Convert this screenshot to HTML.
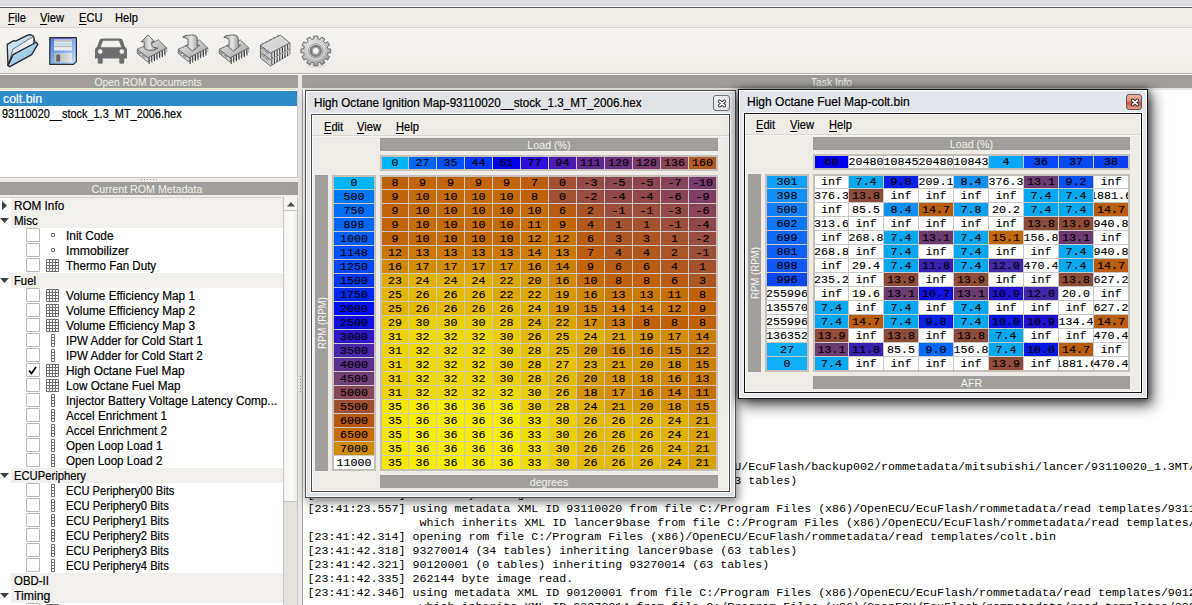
<!DOCTYPE html><html><head><meta charset="utf-8"><style>
*{margin:0;padding:0;box-sizing:border-box}
html,body{width:1192px;height:605px;overflow:hidden;background:#efebe6;font-family:"Liberation Sans",sans-serif}
.m{font-family:"Liberation Mono",monospace}
.c{position:absolute;overflow:hidden;display:flex;justify-content:center;font-family:"Liberation Mono",monospace;font-size:11.67px;color:#000;white-space:pre;-webkit-text-stroke:0.15px #000}
u{text-decoration:none;border-bottom:1px solid #000}
</style></head><body><div style="position:absolute;left:0px;top:0px;width:1192px;height:6px;background:#dcdee2"></div>
<div style="position:absolute;left:0px;top:6px;width:1192px;height:1px;background:#eef0f3"></div>
<div style="position:absolute;left:0px;top:7px;width:1192px;height:1px;background:#5c5c5c"></div>
<div style="position:absolute;left:0px;top:8px;width:1192px;height:19px;background:#efebe6"></div>
<div style="position:absolute;left:0px;top:27px;width:1192px;height:1px;background:#d8d4ce"></div>
<div style="position:absolute;left:0px;top:28px;width:1192px;height:45px;background:linear-gradient(#f7f5f1,#eeebe6)"></div>
<div style="position:absolute;left:0px;top:73px;width:1192px;height:1px;background:#bab6b0"></div>
<div style="position:absolute;left:0px;top:74px;width:1192px;height:1px;background:#f8f7f5"></div>
<div style="position:absolute;left:8px;top:10.88px;font-family:'Liberation Sans', sans-serif;font-size:12.5px;line-height:14.37px;white-space:pre;color:#000;transform:scaleX(0.89);transform-origin:0 0;-webkit-text-stroke:0.2px #000;"><span style="text-decoration:underline;text-underline-offset:2px;text-decoration-thickness:1px">F</span>ile</div>
<div style="position:absolute;left:40px;top:10.88px;font-family:'Liberation Sans', sans-serif;font-size:12.5px;line-height:14.37px;white-space:pre;color:#000;transform:scaleX(0.89);transform-origin:0 0;-webkit-text-stroke:0.2px #000;"><span style="text-decoration:underline;text-underline-offset:2px;text-decoration-thickness:1px">V</span>iew</div>
<div style="position:absolute;left:79px;top:10.88px;font-family:'Liberation Sans', sans-serif;font-size:12.5px;line-height:14.37px;white-space:pre;color:#000;transform:scaleX(0.89);transform-origin:0 0;-webkit-text-stroke:0.2px #000;"><span style="text-decoration:underline;text-underline-offset:2px;text-decoration-thickness:1px">E</span>CU</div>
<div style="position:absolute;left:115px;top:10.88px;font-family:'Liberation Sans', sans-serif;font-size:12.5px;line-height:14.37px;white-space:pre;color:#000;transform:scaleX(0.89);transform-origin:0 0;-webkit-text-stroke:0.2px #000;">Help</div>
<div style="position:absolute;left:0px;top:75px;width:298px;height:13px;background:#a19f9b"></div>
<div style="position:absolute;left:302px;top:75px;width:890px;height:13px;background:#a19f9b"></div>
<div style="position:absolute;left:0px;top:88px;width:1192px;height:2px;background:#e9e6e1"></div>
<div style="position:absolute;left:-1.5px;top:74.5px;width:298px;height:14px;text-align:center;font-size:11px;line-height:14px;color:#f4f2ea;transform:scaleX(0.935)">Open ROM Documents</div>
<div style="position:absolute;left:302px;top:74.5px;width:1059px;height:14px;text-align:center;font-size:11px;line-height:14px;color:#f4f2ea;transform:scaleX(0.935)">Task Info</div>
<div style="position:absolute;left:0px;top:90px;width:298px;height:88px;background:#fff;border-right:1px solid #ccc8c2;border-bottom:1px solid #ccc8c2"></div>
<div style="position:absolute;left:0px;top:91px;width:297px;height:15px;background:#308cc8"></div>
<div style="position:absolute;left:2.5px;top:91.88px;font-family:'Liberation Sans', sans-serif;font-size:12.5px;line-height:14.37px;white-space:pre;color:#fff;transform:scaleX(0.99);transform-origin:0 0;-webkit-text-stroke:0.2px #fff;">colt.bin</div>
<div style="position:absolute;left:1.5px;top:106.88px;font-family:'Liberation Sans', sans-serif;font-size:12.5px;line-height:14.37px;white-space:pre;color:#000;transform:scaleX(0.874);transform-origin:0 0;-webkit-text-stroke:0.2px #000;">93110020__stock_1.3_MT_2006.hex</div>
<div style="position:absolute;left:0px;top:182px;width:298px;height:13px;background:#a19f9b"></div>
<div style="position:absolute;left:-2px;top:181.5px;width:298px;height:14px;text-align:center;font-size:11px;line-height:14px;color:#f4f2ea;transform:scaleX(0.97)">Current ROM Metadata</div>
<div style="position:absolute;left:0px;top:197px;width:298px;height:408px;background:#fff;border-right:1px solid #ccc8c2;border-top:1px solid #d4d0ca"></div>
<div style="position:absolute;left:11px;top:198px;width:272px;height:15px;background:#f2f0ec"></div>
<svg style="position:absolute;left:0px;top:198px" width="12" height="15"><path d="M2 3 L7 7.5 L2 12 Z" fill="#404040"/></svg>
<div style="position:absolute;left:14px;top:199.38px;font-family:'Liberation Sans', sans-serif;font-size:12.5px;line-height:14.37px;white-space:pre;color:#000;transform:scaleX(0.938);transform-origin:0 0;-webkit-text-stroke:0.2px #000;">ROM Info</div>
<div style="position:absolute;left:11px;top:213px;width:272px;height:15px;background:#f2f0ec"></div>
<svg style="position:absolute;left:0px;top:213px" width="12" height="15"><path d="M0 5 L9 5 L4.5 10 Z" fill="#404040"/></svg>
<div style="position:absolute;left:14px;top:214.38px;font-family:'Liberation Sans', sans-serif;font-size:12.5px;line-height:14.37px;white-space:pre;color:#000;transform:scaleX(0.922);transform-origin:0 0;-webkit-text-stroke:0.2px #000;">Misc</div>
<div style="position:absolute;left:26px;top:228px;width:14px;height:14px;background:#fff;border:1px solid #bcb8b2;border-radius:1px"></div>
<div style="position:absolute;left:51px;top:233px;width:4px;height:4px;border:1px solid #6e6e6e;background:#fff;border-radius:1px"></div>
<div style="position:absolute;left:66px;top:229.38px;font-family:'Liberation Sans', sans-serif;font-size:12.5px;line-height:14.37px;white-space:pre;color:#000;transform:scaleX(0.951);transform-origin:0 0;-webkit-text-stroke:0.2px #000;">Init Code</div>
<div style="position:absolute;left:26px;top:243px;width:14px;height:14px;background:#fff;border:1px solid #bcb8b2;border-radius:1px"></div>
<div style="position:absolute;left:51px;top:248px;width:4px;height:4px;border:1px solid #6e6e6e;background:#fff;border-radius:1px"></div>
<div style="position:absolute;left:66px;top:244.38px;font-family:'Liberation Sans', sans-serif;font-size:12.5px;line-height:14.37px;white-space:pre;color:#000;transform:scaleX(0.984);transform-origin:0 0;-webkit-text-stroke:0.2px #000;">Immobilizer</div>
<div style="position:absolute;left:26px;top:258px;width:14px;height:14px;background:#fff;border:1px solid #bcb8b2;border-radius:1px"></div>
<svg style="position:absolute;left:46px;top:259px" width="13" height="13" viewBox="0 0 13 13"><rect x="0" y="0" width="13" height="13" rx="1" fill="#6e6e6e"/><rect x="1" y="1" width="2" height="2" fill="#fff"/><rect x="1" y="4" width="2" height="2" fill="#fff"/><rect x="1" y="7" width="2" height="2" fill="#fff"/><rect x="1" y="10" width="2" height="2" fill="#fff"/><rect x="4" y="1" width="2" height="2" fill="#fff"/><rect x="4" y="4" width="2" height="2" fill="#fff"/><rect x="4" y="7" width="2" height="2" fill="#fff"/><rect x="4" y="10" width="2" height="2" fill="#fff"/><rect x="7" y="1" width="2" height="2" fill="#fff"/><rect x="7" y="4" width="2" height="2" fill="#fff"/><rect x="7" y="7" width="2" height="2" fill="#fff"/><rect x="7" y="10" width="2" height="2" fill="#fff"/><rect x="10" y="1" width="2" height="2" fill="#fff"/><rect x="10" y="4" width="2" height="2" fill="#fff"/><rect x="10" y="7" width="2" height="2" fill="#fff"/><rect x="10" y="10" width="2" height="2" fill="#fff"/></svg>
<div style="position:absolute;left:66px;top:259.38px;font-family:'Liberation Sans', sans-serif;font-size:12.5px;line-height:14.37px;white-space:pre;color:#000;transform:scaleX(0.927);transform-origin:0 0;-webkit-text-stroke:0.2px #000;">Thermo Fan Duty</div>
<div style="position:absolute;left:11px;top:273px;width:272px;height:15px;background:#f2f0ec"></div>
<svg style="position:absolute;left:0px;top:273px" width="12" height="15"><path d="M0 5 L9 5 L4.5 10 Z" fill="#404040"/></svg>
<div style="position:absolute;left:14px;top:274.38px;font-family:'Liberation Sans', sans-serif;font-size:12.5px;line-height:14.37px;white-space:pre;color:#000;transform:scaleX(0.9);transform-origin:0 0;-webkit-text-stroke:0.2px #000;">Fuel</div>
<div style="position:absolute;left:26px;top:288px;width:14px;height:14px;background:#fff;border:1px solid #bcb8b2;border-radius:1px"></div>
<svg style="position:absolute;left:46px;top:289px" width="13" height="13" viewBox="0 0 13 13"><rect x="0" y="0" width="13" height="13" rx="1" fill="#6e6e6e"/><rect x="1" y="1" width="2" height="2" fill="#fff"/><rect x="1" y="4" width="2" height="2" fill="#fff"/><rect x="1" y="7" width="2" height="2" fill="#fff"/><rect x="1" y="10" width="2" height="2" fill="#fff"/><rect x="4" y="1" width="2" height="2" fill="#fff"/><rect x="4" y="4" width="2" height="2" fill="#fff"/><rect x="4" y="7" width="2" height="2" fill="#fff"/><rect x="4" y="10" width="2" height="2" fill="#fff"/><rect x="7" y="1" width="2" height="2" fill="#fff"/><rect x="7" y="4" width="2" height="2" fill="#fff"/><rect x="7" y="7" width="2" height="2" fill="#fff"/><rect x="7" y="10" width="2" height="2" fill="#fff"/><rect x="10" y="1" width="2" height="2" fill="#fff"/><rect x="10" y="4" width="2" height="2" fill="#fff"/><rect x="10" y="7" width="2" height="2" fill="#fff"/><rect x="10" y="10" width="2" height="2" fill="#fff"/></svg>
<div style="position:absolute;left:66px;top:289.38px;font-family:'Liberation Sans', sans-serif;font-size:12.5px;line-height:14.37px;white-space:pre;color:#000;transform:scaleX(0.944);transform-origin:0 0;-webkit-text-stroke:0.2px #000;">Volume Efficiency Map 1</div>
<div style="position:absolute;left:26px;top:303px;width:14px;height:14px;background:#fff;border:1px solid #bcb8b2;border-radius:1px"></div>
<svg style="position:absolute;left:46px;top:304px" width="13" height="13" viewBox="0 0 13 13"><rect x="0" y="0" width="13" height="13" rx="1" fill="#6e6e6e"/><rect x="1" y="1" width="2" height="2" fill="#fff"/><rect x="1" y="4" width="2" height="2" fill="#fff"/><rect x="1" y="7" width="2" height="2" fill="#fff"/><rect x="1" y="10" width="2" height="2" fill="#fff"/><rect x="4" y="1" width="2" height="2" fill="#fff"/><rect x="4" y="4" width="2" height="2" fill="#fff"/><rect x="4" y="7" width="2" height="2" fill="#fff"/><rect x="4" y="10" width="2" height="2" fill="#fff"/><rect x="7" y="1" width="2" height="2" fill="#fff"/><rect x="7" y="4" width="2" height="2" fill="#fff"/><rect x="7" y="7" width="2" height="2" fill="#fff"/><rect x="7" y="10" width="2" height="2" fill="#fff"/><rect x="10" y="1" width="2" height="2" fill="#fff"/><rect x="10" y="4" width="2" height="2" fill="#fff"/><rect x="10" y="7" width="2" height="2" fill="#fff"/><rect x="10" y="10" width="2" height="2" fill="#fff"/></svg>
<div style="position:absolute;left:66px;top:304.38px;font-family:'Liberation Sans', sans-serif;font-size:12.5px;line-height:14.37px;white-space:pre;color:#000;transform:scaleX(0.944);transform-origin:0 0;-webkit-text-stroke:0.2px #000;">Volume Efficiency Map 2</div>
<div style="position:absolute;left:26px;top:318px;width:14px;height:14px;background:#fff;border:1px solid #bcb8b2;border-radius:1px"></div>
<svg style="position:absolute;left:46px;top:319px" width="13" height="13" viewBox="0 0 13 13"><rect x="0" y="0" width="13" height="13" rx="1" fill="#6e6e6e"/><rect x="1" y="1" width="2" height="2" fill="#fff"/><rect x="1" y="4" width="2" height="2" fill="#fff"/><rect x="1" y="7" width="2" height="2" fill="#fff"/><rect x="1" y="10" width="2" height="2" fill="#fff"/><rect x="4" y="1" width="2" height="2" fill="#fff"/><rect x="4" y="4" width="2" height="2" fill="#fff"/><rect x="4" y="7" width="2" height="2" fill="#fff"/><rect x="4" y="10" width="2" height="2" fill="#fff"/><rect x="7" y="1" width="2" height="2" fill="#fff"/><rect x="7" y="4" width="2" height="2" fill="#fff"/><rect x="7" y="7" width="2" height="2" fill="#fff"/><rect x="7" y="10" width="2" height="2" fill="#fff"/><rect x="10" y="1" width="2" height="2" fill="#fff"/><rect x="10" y="4" width="2" height="2" fill="#fff"/><rect x="10" y="7" width="2" height="2" fill="#fff"/><rect x="10" y="10" width="2" height="2" fill="#fff"/></svg>
<div style="position:absolute;left:66px;top:319.38px;font-family:'Liberation Sans', sans-serif;font-size:12.5px;line-height:14.37px;white-space:pre;color:#000;transform:scaleX(0.944);transform-origin:0 0;-webkit-text-stroke:0.2px #000;">Volume Efficiency Map 3</div>
<div style="position:absolute;left:26px;top:333px;width:14px;height:14px;background:#fff;border:1px solid #bcb8b2;border-radius:1px"></div>
<svg style="position:absolute;left:51px;top:334px" width="4" height="13" viewBox="0 0 4 13"><rect x="0" y="0" width="4" height="13" rx="1" fill="#6e6e6e"/><rect x="1" y="1" width="2" height="2" fill="#fff"/><rect x="1" y="4" width="2" height="2" fill="#fff"/><rect x="1" y="7" width="2" height="2" fill="#fff"/><rect x="1" y="10" width="2" height="2" fill="#fff"/></svg>
<div style="position:absolute;left:66px;top:334.38px;font-family:'Liberation Sans', sans-serif;font-size:12.5px;line-height:14.37px;white-space:pre;color:#000;transform:scaleX(0.928);transform-origin:0 0;-webkit-text-stroke:0.2px #000;">IPW Adder for Cold Start 1</div>
<div style="position:absolute;left:26px;top:348px;width:14px;height:14px;background:#fff;border:1px solid #bcb8b2;border-radius:1px"></div>
<svg style="position:absolute;left:51px;top:349px" width="4" height="13" viewBox="0 0 4 13"><rect x="0" y="0" width="4" height="13" rx="1" fill="#6e6e6e"/><rect x="1" y="1" width="2" height="2" fill="#fff"/><rect x="1" y="4" width="2" height="2" fill="#fff"/><rect x="1" y="7" width="2" height="2" fill="#fff"/><rect x="1" y="10" width="2" height="2" fill="#fff"/></svg>
<div style="position:absolute;left:66px;top:349.38px;font-family:'Liberation Sans', sans-serif;font-size:12.5px;line-height:14.37px;white-space:pre;color:#000;transform:scaleX(0.928);transform-origin:0 0;-webkit-text-stroke:0.2px #000;">IPW Adder for Cold Start 2</div>
<div style="position:absolute;left:26px;top:363px;width:14px;height:14px;background:#fff;border:1px solid #bcb8b2;border-radius:1px"></div>
<svg style="position:absolute;left:27px;top:365px" width="11" height="11"><path d="M2 5.5 L4.5 8.5 L9 2" fill="none" stroke="#000" stroke-width="1.8"/></svg>
<svg style="position:absolute;left:46px;top:364px" width="13" height="13" viewBox="0 0 13 13"><rect x="0" y="0" width="13" height="13" rx="1" fill="#6e6e6e"/><rect x="1" y="1" width="2" height="2" fill="#fff"/><rect x="1" y="4" width="2" height="2" fill="#fff"/><rect x="1" y="7" width="2" height="2" fill="#fff"/><rect x="1" y="10" width="2" height="2" fill="#fff"/><rect x="4" y="1" width="2" height="2" fill="#fff"/><rect x="4" y="4" width="2" height="2" fill="#fff"/><rect x="4" y="7" width="2" height="2" fill="#fff"/><rect x="4" y="10" width="2" height="2" fill="#fff"/><rect x="7" y="1" width="2" height="2" fill="#fff"/><rect x="7" y="4" width="2" height="2" fill="#fff"/><rect x="7" y="7" width="2" height="2" fill="#fff"/><rect x="7" y="10" width="2" height="2" fill="#fff"/><rect x="10" y="1" width="2" height="2" fill="#fff"/><rect x="10" y="4" width="2" height="2" fill="#fff"/><rect x="10" y="7" width="2" height="2" fill="#fff"/><rect x="10" y="10" width="2" height="2" fill="#fff"/></svg>
<div style="position:absolute;left:66px;top:364.38px;font-family:'Liberation Sans', sans-serif;font-size:12.5px;line-height:14.37px;white-space:pre;color:#000;transform:scaleX(0.948);transform-origin:0 0;-webkit-text-stroke:0.2px #000;">High Octane Fuel Map</div>
<div style="position:absolute;left:26px;top:378px;width:14px;height:14px;background:#fff;border:1px solid #bcb8b2;border-radius:1px"></div>
<svg style="position:absolute;left:46px;top:379px" width="13" height="13" viewBox="0 0 13 13"><rect x="0" y="0" width="13" height="13" rx="1" fill="#6e6e6e"/><rect x="1" y="1" width="2" height="2" fill="#fff"/><rect x="1" y="4" width="2" height="2" fill="#fff"/><rect x="1" y="7" width="2" height="2" fill="#fff"/><rect x="1" y="10" width="2" height="2" fill="#fff"/><rect x="4" y="1" width="2" height="2" fill="#fff"/><rect x="4" y="4" width="2" height="2" fill="#fff"/><rect x="4" y="7" width="2" height="2" fill="#fff"/><rect x="4" y="10" width="2" height="2" fill="#fff"/><rect x="7" y="1" width="2" height="2" fill="#fff"/><rect x="7" y="4" width="2" height="2" fill="#fff"/><rect x="7" y="7" width="2" height="2" fill="#fff"/><rect x="7" y="10" width="2" height="2" fill="#fff"/><rect x="10" y="1" width="2" height="2" fill="#fff"/><rect x="10" y="4" width="2" height="2" fill="#fff"/><rect x="10" y="7" width="2" height="2" fill="#fff"/><rect x="10" y="10" width="2" height="2" fill="#fff"/></svg>
<div style="position:absolute;left:66px;top:379.38px;font-family:'Liberation Sans', sans-serif;font-size:12.5px;line-height:14.37px;white-space:pre;color:#000;transform:scaleX(0.936);transform-origin:0 0;-webkit-text-stroke:0.2px #000;">Low Octane Fuel Map</div>
<div style="position:absolute;left:26px;top:393px;width:14px;height:14px;background:#fff;border:1px solid #bcb8b2;border-radius:1px"></div>
<svg style="position:absolute;left:51px;top:394px" width="4" height="13" viewBox="0 0 4 13"><rect x="0" y="0" width="4" height="13" rx="1" fill="#6e6e6e"/><rect x="1" y="1" width="2" height="2" fill="#fff"/><rect x="1" y="4" width="2" height="2" fill="#fff"/><rect x="1" y="7" width="2" height="2" fill="#fff"/><rect x="1" y="10" width="2" height="2" fill="#fff"/></svg>
<div style="position:absolute;left:66px;top:394.38px;font-family:'Liberation Sans', sans-serif;font-size:12.5px;line-height:14.37px;white-space:pre;color:#000;transform:scaleX(0.944);transform-origin:0 0;-webkit-text-stroke:0.2px #000;">Injector Battery Voltage Latency Comp...</div>
<div style="position:absolute;left:26px;top:408px;width:14px;height:14px;background:#fff;border:1px solid #bcb8b2;border-radius:1px"></div>
<svg style="position:absolute;left:51px;top:409px" width="4" height="13" viewBox="0 0 4 13"><rect x="0" y="0" width="4" height="13" rx="1" fill="#6e6e6e"/><rect x="1" y="1" width="2" height="2" fill="#fff"/><rect x="1" y="4" width="2" height="2" fill="#fff"/><rect x="1" y="7" width="2" height="2" fill="#fff"/><rect x="1" y="10" width="2" height="2" fill="#fff"/></svg>
<div style="position:absolute;left:66px;top:409.38px;font-family:'Liberation Sans', sans-serif;font-size:12.5px;line-height:14.37px;white-space:pre;color:#000;transform:scaleX(0.938);transform-origin:0 0;-webkit-text-stroke:0.2px #000;">Accel Enrichment 1</div>
<div style="position:absolute;left:26px;top:423px;width:14px;height:14px;background:#fff;border:1px solid #bcb8b2;border-radius:1px"></div>
<svg style="position:absolute;left:51px;top:424px" width="4" height="13" viewBox="0 0 4 13"><rect x="0" y="0" width="4" height="13" rx="1" fill="#6e6e6e"/><rect x="1" y="1" width="2" height="2" fill="#fff"/><rect x="1" y="4" width="2" height="2" fill="#fff"/><rect x="1" y="7" width="2" height="2" fill="#fff"/><rect x="1" y="10" width="2" height="2" fill="#fff"/></svg>
<div style="position:absolute;left:66px;top:424.38px;font-family:'Liberation Sans', sans-serif;font-size:12.5px;line-height:14.37px;white-space:pre;color:#000;transform:scaleX(0.938);transform-origin:0 0;-webkit-text-stroke:0.2px #000;">Accel Enrichment 2</div>
<div style="position:absolute;left:26px;top:438px;width:14px;height:14px;background:#fff;border:1px solid #bcb8b2;border-radius:1px"></div>
<svg style="position:absolute;left:51px;top:439px" width="4" height="13" viewBox="0 0 4 13"><rect x="0" y="0" width="4" height="13" rx="1" fill="#6e6e6e"/><rect x="1" y="1" width="2" height="2" fill="#fff"/><rect x="1" y="4" width="2" height="2" fill="#fff"/><rect x="1" y="7" width="2" height="2" fill="#fff"/><rect x="1" y="10" width="2" height="2" fill="#fff"/></svg>
<div style="position:absolute;left:66px;top:439.38px;font-family:'Liberation Sans', sans-serif;font-size:12.5px;line-height:14.37px;white-space:pre;color:#000;transform:scaleX(0.931);transform-origin:0 0;-webkit-text-stroke:0.2px #000;">Open Loop Load 1</div>
<div style="position:absolute;left:26px;top:453px;width:14px;height:14px;background:#fff;border:1px solid #bcb8b2;border-radius:1px"></div>
<svg style="position:absolute;left:51px;top:454px" width="4" height="13" viewBox="0 0 4 13"><rect x="0" y="0" width="4" height="13" rx="1" fill="#6e6e6e"/><rect x="1" y="1" width="2" height="2" fill="#fff"/><rect x="1" y="4" width="2" height="2" fill="#fff"/><rect x="1" y="7" width="2" height="2" fill="#fff"/><rect x="1" y="10" width="2" height="2" fill="#fff"/></svg>
<div style="position:absolute;left:66px;top:454.38px;font-family:'Liberation Sans', sans-serif;font-size:12.5px;line-height:14.37px;white-space:pre;color:#000;transform:scaleX(0.931);transform-origin:0 0;-webkit-text-stroke:0.2px #000;">Open Loop Load 2</div>
<div style="position:absolute;left:11px;top:468px;width:272px;height:15px;background:#f2f0ec"></div>
<svg style="position:absolute;left:0px;top:468px" width="12" height="15"><path d="M0 5 L9 5 L4.5 10 Z" fill="#404040"/></svg>
<div style="position:absolute;left:14px;top:469.38px;font-family:'Liberation Sans', sans-serif;font-size:12.5px;line-height:14.37px;white-space:pre;color:#000;transform:scaleX(0.899);transform-origin:0 0;-webkit-text-stroke:0.2px #000;">ECUPeriphery</div>
<div style="position:absolute;left:26px;top:483px;width:14px;height:14px;background:#fff;border:1px solid #bcb8b2;border-radius:1px"></div>
<svg style="position:absolute;left:51px;top:484px" width="4" height="13" viewBox="0 0 4 13"><rect x="0" y="0" width="4" height="13" rx="1" fill="#6e6e6e"/><rect x="1" y="1" width="2" height="2" fill="#fff"/><rect x="1" y="4" width="2" height="2" fill="#fff"/><rect x="1" y="7" width="2" height="2" fill="#fff"/><rect x="1" y="10" width="2" height="2" fill="#fff"/></svg>
<div style="position:absolute;left:66px;top:484.38px;font-family:'Liberation Sans', sans-serif;font-size:12.5px;line-height:14.37px;white-space:pre;color:#000;transform:scaleX(0.891);transform-origin:0 0;-webkit-text-stroke:0.2px #000;">ECU Periphery00 Bits</div>
<div style="position:absolute;left:26px;top:498px;width:14px;height:14px;background:#fff;border:1px solid #bcb8b2;border-radius:1px"></div>
<svg style="position:absolute;left:51px;top:499px" width="4" height="13" viewBox="0 0 4 13"><rect x="0" y="0" width="4" height="13" rx="1" fill="#6e6e6e"/><rect x="1" y="1" width="2" height="2" fill="#fff"/><rect x="1" y="4" width="2" height="2" fill="#fff"/><rect x="1" y="7" width="2" height="2" fill="#fff"/><rect x="1" y="10" width="2" height="2" fill="#fff"/></svg>
<div style="position:absolute;left:66px;top:499.38px;font-family:'Liberation Sans', sans-serif;font-size:12.5px;line-height:14.37px;white-space:pre;color:#000;transform:scaleX(0.897);transform-origin:0 0;-webkit-text-stroke:0.2px #000;">ECU Periphery0 Bits</div>
<div style="position:absolute;left:26px;top:513px;width:14px;height:14px;background:#fff;border:1px solid #bcb8b2;border-radius:1px"></div>
<svg style="position:absolute;left:51px;top:514px" width="4" height="13" viewBox="0 0 4 13"><rect x="0" y="0" width="4" height="13" rx="1" fill="#6e6e6e"/><rect x="1" y="1" width="2" height="2" fill="#fff"/><rect x="1" y="4" width="2" height="2" fill="#fff"/><rect x="1" y="7" width="2" height="2" fill="#fff"/><rect x="1" y="10" width="2" height="2" fill="#fff"/></svg>
<div style="position:absolute;left:66px;top:514.38px;font-family:'Liberation Sans', sans-serif;font-size:12.5px;line-height:14.37px;white-space:pre;color:#000;transform:scaleX(0.897);transform-origin:0 0;-webkit-text-stroke:0.2px #000;">ECU Periphery1 Bits</div>
<div style="position:absolute;left:26px;top:528px;width:14px;height:14px;background:#fff;border:1px solid #bcb8b2;border-radius:1px"></div>
<svg style="position:absolute;left:51px;top:529px" width="4" height="13" viewBox="0 0 4 13"><rect x="0" y="0" width="4" height="13" rx="1" fill="#6e6e6e"/><rect x="1" y="1" width="2" height="2" fill="#fff"/><rect x="1" y="4" width="2" height="2" fill="#fff"/><rect x="1" y="7" width="2" height="2" fill="#fff"/><rect x="1" y="10" width="2" height="2" fill="#fff"/></svg>
<div style="position:absolute;left:66px;top:529.38px;font-family:'Liberation Sans', sans-serif;font-size:12.5px;line-height:14.37px;white-space:pre;color:#000;transform:scaleX(0.897);transform-origin:0 0;-webkit-text-stroke:0.2px #000;">ECU Periphery2 Bits</div>
<div style="position:absolute;left:26px;top:543px;width:14px;height:14px;background:#fff;border:1px solid #bcb8b2;border-radius:1px"></div>
<svg style="position:absolute;left:51px;top:544px" width="4" height="13" viewBox="0 0 4 13"><rect x="0" y="0" width="4" height="13" rx="1" fill="#6e6e6e"/><rect x="1" y="1" width="2" height="2" fill="#fff"/><rect x="1" y="4" width="2" height="2" fill="#fff"/><rect x="1" y="7" width="2" height="2" fill="#fff"/><rect x="1" y="10" width="2" height="2" fill="#fff"/></svg>
<div style="position:absolute;left:66px;top:544.38px;font-family:'Liberation Sans', sans-serif;font-size:12.5px;line-height:14.37px;white-space:pre;color:#000;transform:scaleX(0.897);transform-origin:0 0;-webkit-text-stroke:0.2px #000;">ECU Periphery3 Bits</div>
<div style="position:absolute;left:26px;top:558px;width:14px;height:14px;background:#fff;border:1px solid #bcb8b2;border-radius:1px"></div>
<svg style="position:absolute;left:51px;top:559px" width="4" height="13" viewBox="0 0 4 13"><rect x="0" y="0" width="4" height="13" rx="1" fill="#6e6e6e"/><rect x="1" y="1" width="2" height="2" fill="#fff"/><rect x="1" y="4" width="2" height="2" fill="#fff"/><rect x="1" y="7" width="2" height="2" fill="#fff"/><rect x="1" y="10" width="2" height="2" fill="#fff"/></svg>
<div style="position:absolute;left:66px;top:559.38px;font-family:'Liberation Sans', sans-serif;font-size:12.5px;line-height:14.37px;white-space:pre;color:#000;transform:scaleX(0.897);transform-origin:0 0;-webkit-text-stroke:0.2px #000;">ECU Periphery4 Bits</div>
<div style="position:absolute;left:11px;top:573px;width:272px;height:15px;background:#f2f0ec"></div>
<div style="position:absolute;left:14px;top:574.38px;font-family:'Liberation Sans', sans-serif;font-size:12.5px;line-height:14.37px;white-space:pre;color:#000;transform:scaleX(0.914);transform-origin:0 0;-webkit-text-stroke:0.2px #000;">OBD-II</div>
<div style="position:absolute;left:11px;top:588px;width:272px;height:15px;background:#f2f0ec"></div>
<svg style="position:absolute;left:0px;top:588px" width="12" height="15"><path d="M0 5 L9 5 L4.5 10 Z" fill="#404040"/></svg>
<div style="position:absolute;left:14px;top:589.38px;font-family:'Liberation Sans', sans-serif;font-size:12.5px;line-height:14.37px;white-space:pre;color:#000;transform:scaleX(0.98);transform-origin:0 0;-webkit-text-stroke:0.2px #000;">Timing</div>
<div style="position:absolute;left:26px;top:603px;width:14px;height:14px;background:#fff;border:1px solid #bcb8b2;border-radius:1px"></div>
<svg style="position:absolute;left:46px;top:604px" width="13" height="13" viewBox="0 0 13 13"><rect x="0" y="0" width="13" height="13" rx="1" fill="#6e6e6e"/><rect x="1" y="1" width="2" height="2" fill="#fff"/><rect x="1" y="4" width="2" height="2" fill="#fff"/><rect x="1" y="7" width="2" height="2" fill="#fff"/><rect x="1" y="10" width="2" height="2" fill="#fff"/><rect x="4" y="1" width="2" height="2" fill="#fff"/><rect x="4" y="4" width="2" height="2" fill="#fff"/><rect x="4" y="7" width="2" height="2" fill="#fff"/><rect x="4" y="10" width="2" height="2" fill="#fff"/><rect x="7" y="1" width="2" height="2" fill="#fff"/><rect x="7" y="4" width="2" height="2" fill="#fff"/><rect x="7" y="7" width="2" height="2" fill="#fff"/><rect x="7" y="10" width="2" height="2" fill="#fff"/><rect x="10" y="1" width="2" height="2" fill="#fff"/><rect x="10" y="4" width="2" height="2" fill="#fff"/><rect x="10" y="7" width="2" height="2" fill="#fff"/><rect x="10" y="10" width="2" height="2" fill="#fff"/></svg>
<div style="position:absolute;left:283px;top:197px;width:15px;height:408px;background:#e6e3de;border-left:1px solid #c8c4be;border-right:1px solid #c8c4be"></div>
<div style="position:absolute;left:284px;top:197px;width:13px;height:14px;background:#f6f5f2;border-bottom:1px solid #c8c4be"></div>
<svg style="position:absolute;left:286px;top:201px" width="10" height="6"><path d="M1 5.5 L5 1 L9 5.5 Z" fill="#505050"/></svg>
<div style="position:absolute;left:284px;top:211px;width:13px;height:291px;background:linear-gradient(90deg,#f4f3f0,#fbfbfa 60%,#efeeea);border-bottom:1px solid #c8c4be"></div>
<div style="position:absolute;left:298px;top:75px;width:4px;height:530px;background:#ebe8e3"></div>
<div style="position:absolute;left:141px;top:179px;width:1px;height:1px;background:#8c8c8c"></div>
<div style="position:absolute;left:300px;top:376px;width:1px;height:1px;background:#8c8c8c"></div>
<div style="position:absolute;left:144px;top:179px;width:1px;height:1px;background:#8c8c8c"></div>
<div style="position:absolute;left:300px;top:379px;width:1px;height:1px;background:#8c8c8c"></div>
<div style="position:absolute;left:147px;top:179px;width:1px;height:1px;background:#8c8c8c"></div>
<div style="position:absolute;left:300px;top:382px;width:1px;height:1px;background:#8c8c8c"></div>
<div style="position:absolute;left:150px;top:179px;width:1px;height:1px;background:#8c8c8c"></div>
<div style="position:absolute;left:300px;top:385px;width:1px;height:1px;background:#8c8c8c"></div>
<div style="position:absolute;left:153px;top:179px;width:1px;height:1px;background:#8c8c8c"></div>
<div style="position:absolute;left:300px;top:388px;width:1px;height:1px;background:#8c8c8c"></div>
<div style="position:absolute;left:156px;top:179px;width:1px;height:1px;background:#8c8c8c"></div>
<div style="position:absolute;left:300px;top:391px;width:1px;height:1px;background:#8c8c8c"></div>
<div style="position:absolute;left:302px;top:90px;width:890px;height:515px;background:#fff;border-left:1px solid #a8a8a8"></div>
<div style="position:absolute;left:307.5px;top:461.01px;font-family:'Liberation Mono', monospace;font-size:11.67px;line-height:13.42px;white-space:pre;color:#000;transform:scaleY(0.87);transform-origin:0 9.8px;">[23:41:23.540] opening rom file C:/Program Files (x86)/OpenECU/EcuFlash/backup002/rommetadata/mitsubishi/lancer/93110020_1.3MT/93110020__stock_1.3_MT_2006.hex</div>
<div style="position:absolute;left:307.5px;top:475.01px;font-family:'Liberation Mono', monospace;font-size:11.67px;line-height:13.42px;white-space:pre;color:#000;transform:scaleY(0.87);transform-origin:0 9.8px;">[23:41:23.548] 93110020 (34 tables) inheriting lancer9base (63 tables)</div>
<div style="position:absolute;left:307.5px;top:489.01px;font-family:'Liberation Mono', monospace;font-size:11.67px;line-height:13.42px;white-space:pre;color:#000;transform:scaleY(0.87);transform-origin:0 9.8px;">[23:41:23.551] 262144 byte image read.</div>
<div style="position:absolute;left:307.5px;top:503.01px;font-family:'Liberation Mono', monospace;font-size:11.67px;line-height:13.42px;white-space:pre;color:#000;transform:scaleY(0.87);transform-origin:0 9.8px;">[23:41:23.557] using metadata XML ID 93110020 from file C:/Program Files (x86)/OpenECU/EcuFlash/rommetadata/read templates/93110020.xml</div>
<div style="position:absolute;left:307.5px;top:517.01px;font-family:'Liberation Mono', monospace;font-size:11.67px;line-height:13.42px;white-space:pre;color:#000;transform:scaleY(0.87);transform-origin:0 9.8px;">                which inherits XML ID lancer9base from file C:/Program Files (x86)/OpenECU/EcuFlash/rommetadata/read templates/lancer9base.xml</div>
<div style="position:absolute;left:307.5px;top:531.01px;font-family:'Liberation Mono', monospace;font-size:11.67px;line-height:13.42px;white-space:pre;color:#000;transform:scaleY(0.87);transform-origin:0 9.8px;">[23:41:42.314] opening rom file C:/Program Files (x86)/OpenECU/EcuFlash/rommetadata/read templates/colt.bin</div>
<div style="position:absolute;left:307.5px;top:545.01px;font-family:'Liberation Mono', monospace;font-size:11.67px;line-height:13.42px;white-space:pre;color:#000;transform:scaleY(0.87);transform-origin:0 9.8px;">[23:41:42.318] 93270014 (34 tables) inheriting lancer9base (63 tables)</div>
<div style="position:absolute;left:307.5px;top:559.01px;font-family:'Liberation Mono', monospace;font-size:11.67px;line-height:13.42px;white-space:pre;color:#000;transform:scaleY(0.87);transform-origin:0 9.8px;">[23:41:42.321] 90120001 (0 tables) inheriting 93270014 (63 tables)</div>
<div style="position:absolute;left:307.5px;top:573.01px;font-family:'Liberation Mono', monospace;font-size:11.67px;line-height:13.42px;white-space:pre;color:#000;transform:scaleY(0.87);transform-origin:0 9.8px;">[23:41:42.335] 262144 byte image read.</div>
<div style="position:absolute;left:307.5px;top:587.01px;font-family:'Liberation Mono', monospace;font-size:11.67px;line-height:13.42px;white-space:pre;color:#000;transform:scaleY(0.87);transform-origin:0 9.8px;">[23:41:42.346] using metadata XML ID 90120001 from file C:/Program Files (x86)/OpenECU/EcuFlash/rommetadata/read templates/90120001.xml</div>
<div style="position:absolute;left:307.5px;top:601.01px;font-family:'Liberation Mono', monospace;font-size:11.67px;line-height:13.42px;white-space:pre;color:#000;transform:scaleY(0.87);transform-origin:0 9.8px;">                which inherits XML ID 93270014 from file C:/Program Files (x86)/OpenECU/EcuFlash/rommetadata/read templates/93270014.xml</div>
<div style="position:absolute;left:305px;top:90px;width:431px;height:408px;background:#e2e3e6;border:1px solid #505050;box-shadow:2px 4px 9px rgba(0,0,0,0.5);"></div>
<div style="position:absolute;left:306px;top:91px;width:429px;height:406px;border:1px solid rgba(255,255,255,0.8)"></div>
<div style="position:absolute;left:314px;top:96.38px;font-family:'Liberation Sans', sans-serif;font-size:12.5px;line-height:14.37px;white-space:pre;color:#000;transform:scaleX(0.934);transform-origin:0 0;-webkit-text-stroke:0.2px #000;">High Octane Ignition Map-93110020__stock_1.3_MT_2006.hex</div>
<div style="position:absolute;left:310px;top:113px;width:421px;height:1px;background:rgba(255,255,255,0.85)"></div>
<div style="position:absolute;left:311px;top:114px;width:419px;height:378px;background:#efebe6;border:1px solid #4a4a4a;box-shadow:inset 0 0 0 1px #fbfaf8;outline:1px solid rgba(255,255,255,0.85)"></div>
<div style="position:absolute;left:312px;top:115px;width:417px;height:1px;background:#fff"></div>
<div style="position:absolute;left:713px;top:95px;width:17px;height:16px;border:1px solid #6e7278;border-radius:3px;background:linear-gradient(#f2f3f5,#dfe2e6)"></div>
<svg style="position:absolute;left:717px;top:99px" width="10" height="9" viewBox="0 0 10 9"><path d="M2.6 2.4 L7.4 6.6 M7.4 2.4 L2.6 6.6" stroke="#2a2e48" stroke-width="3.4" stroke-linecap="round"/><path d="M2.6 2.4 L7.4 6.6 M7.4 2.4 L2.6 6.6" stroke="#fff" stroke-width="1.7" stroke-linecap="round"/></svg>
<div style="position:absolute;left:324px;top:119.88px;font-family:'Liberation Sans', sans-serif;font-size:12.5px;line-height:14.37px;white-space:pre;color:#000;transform:scaleX(0.89);transform-origin:0 0;-webkit-text-stroke:0.2px #000;"><span style="text-decoration:underline;text-underline-offset:2px;text-decoration-thickness:1px">E</span>dit</div>
<div style="position:absolute;left:357px;top:119.88px;font-family:'Liberation Sans', sans-serif;font-size:12.5px;line-height:14.37px;white-space:pre;color:#000;transform:scaleX(0.89);transform-origin:0 0;-webkit-text-stroke:0.2px #000;"><span style="text-decoration:underline;text-underline-offset:2px;text-decoration-thickness:1px">V</span>iew</div>
<div style="position:absolute;left:396px;top:119.88px;font-family:'Liberation Sans', sans-serif;font-size:12.5px;line-height:14.37px;white-space:pre;color:#000;transform:scaleX(0.89);transform-origin:0 0;-webkit-text-stroke:0.2px #000;"><span style="text-decoration:underline;text-underline-offset:2px;text-decoration-thickness:1px">H</span>elp</div>
<div style="position:absolute;left:312px;top:135px;width:417px;height:1px;background:#d9d5cf"></div>
<div style="position:absolute;left:312px;top:136px;width:417px;height:1px;background:#f8f6f3"></div>
<div style="position:absolute;left:380px;top:138px;width:338px;height:13px;background:#a19f9b"></div>
<div style="position:absolute;left:380px;top:137.8px;width:338px;height:14px;text-align:center;font-size:11px;line-height:14px;color:#f4f2ea;transform:scaleX(0.97)">Load (%)</div>
<div style="position:absolute;left:380px;top:155px;width:338px;height:16px;background:#c8c8c8;border:2px solid #c4c0b9"></div>
<div class="c" style="left:382px;top:157px;width:26px;height:12px;line-height:13px;background:#00b4f8">0</div>
<div class="c" style="left:409px;top:157px;width:27px;height:12px;line-height:13px;background:#0068f8">27</div>
<div class="c" style="left:437px;top:157px;width:27px;height:12px;line-height:13px;background:#0050f8">35</div>
<div class="c" style="left:465px;top:157px;width:27px;height:12px;line-height:13px;background:#0038f8">44</div>
<div class="c" style="left:493px;top:157px;width:27px;height:12px;line-height:13px;background:#0000f0">61</div>
<div class="c" style="left:521px;top:157px;width:27px;height:12px;line-height:13px;background:#2a10d8">77</div>
<div class="c" style="left:549px;top:157px;width:27px;height:12px;line-height:13px;background:#4a1cb0">94</div>
<div class="c" style="left:577px;top:157px;width:27px;height:12px;line-height:13px;background:#5e2a90">111</div>
<div class="c" style="left:605px;top:157px;width:27px;height:12px;line-height:13px;background:#6c3080">120</div>
<div class="c" style="left:633px;top:157px;width:27px;height:12px;line-height:13px;background:#7a3a70">128</div>
<div class="c" style="left:661px;top:157px;width:27px;height:12px;line-height:13px;background:#8a4458">136</div>
<div class="c" style="left:689px;top:157px;width:27px;height:12px;line-height:13px;background:#b05a20">160</div>
<div style="position:absolute;left:315px;top:175px;width:13px;height:296px;background:#a19f9b"></div>
<div style="position:absolute;left:173.5px;top:316.0px;width:296px;height:14px;transform:rotate(-90deg) scaleX(0.88);text-align:center;font-size:11px;line-height:14px;color:#f4f4f4;white-space:nowrap">RPM (RPM)</div>
<div style="position:absolute;left:332px;top:175px;width:44px;height:296px;background:#c8c8c8;border:2px solid #c4c0b9"></div>
<div class="c" style="left:334px;top:177px;width:40px;height:12px;line-height:13px;background:#00b4f8">0</div>
<div class="c" style="left:334px;top:190px;width:40px;height:13px;line-height:14px;background:#0078f8">500</div>
<div class="c" style="left:334px;top:204px;width:40px;height:13px;line-height:14px;background:#0070f8">750</div>
<div class="c" style="left:334px;top:218px;width:40px;height:13px;line-height:14px;background:#0068f8">898</div>
<div class="c" style="left:334px;top:232px;width:40px;height:13px;line-height:14px;background:#0060f8">1000</div>
<div class="c" style="left:334px;top:246px;width:40px;height:13px;line-height:14px;background:#0050f8">1148</div>
<div class="c" style="left:334px;top:260px;width:40px;height:13px;line-height:14px;background:#0048f8">1250</div>
<div class="c" style="left:334px;top:274px;width:40px;height:13px;line-height:14px;background:#0038f0">1500</div>
<div class="c" style="left:334px;top:288px;width:40px;height:13px;line-height:14px;background:#0028f0">1750</div>
<div class="c" style="left:334px;top:302px;width:40px;height:13px;line-height:14px;background:#0010f0">2000</div>
<div class="c" style="left:334px;top:316px;width:40px;height:13px;line-height:14px;background:#1010e0">2500</div>
<div class="c" style="left:334px;top:330px;width:40px;height:13px;line-height:14px;background:#3018c8">3000</div>
<div class="c" style="left:334px;top:344px;width:40px;height:13px;line-height:14px;background:#4828a8">3500</div>
<div class="c" style="left:334px;top:358px;width:40px;height:13px;line-height:14px;background:#5c3090">4000</div>
<div class="c" style="left:334px;top:372px;width:40px;height:13px;line-height:14px;background:#744078">4500</div>
<div class="c" style="left:334px;top:386px;width:40px;height:13px;line-height:14px;background:#884858">5000</div>
<div class="c" style="left:334px;top:400px;width:40px;height:13px;line-height:14px;background:#a05030">5500</div>
<div class="c" style="left:334px;top:414px;width:40px;height:13px;line-height:14px;background:#b85810">6000</div>
<div class="c" style="left:334px;top:428px;width:40px;height:13px;line-height:14px;background:#c86c08">6500</div>
<div class="c" style="left:334px;top:442px;width:40px;height:13px;line-height:14px;background:#d08c08">7000</div>
<div class="c" style="left:334px;top:456px;width:40px;height:13px;line-height:14px;background:#ffffff">11000</div>
<div style="position:absolute;left:380px;top:175px;width:338px;height:296px;background:#c8c8c8;border:2px solid #c4c0b9"></div>
<div class="c" style="left:382px;top:177px;width:26px;height:12px;line-height:13px;background:#c06008">8</div>
<div class="c" style="left:409px;top:177px;width:27px;height:12px;line-height:13px;background:#c26508">9</div>
<div class="c" style="left:437px;top:177px;width:27px;height:12px;line-height:13px;background:#c26508">9</div>
<div class="c" style="left:465px;top:177px;width:27px;height:12px;line-height:13px;background:#c26508">9</div>
<div class="c" style="left:493px;top:177px;width:27px;height:12px;line-height:13px;background:#c26508">9</div>
<div class="c" style="left:521px;top:177px;width:27px;height:12px;line-height:13px;background:#bc5e0e">7</div>
<div class="c" style="left:549px;top:177px;width:27px;height:12px;line-height:13px;background:#a15034">0</div>
<div class="c" style="left:577px;top:177px;width:27px;height:12px;line-height:13px;background:#954a45">-3</div>
<div class="c" style="left:605px;top:177px;width:27px;height:12px;line-height:13px;background:#8d4650">-5</div>
<div class="c" style="left:633px;top:177px;width:27px;height:12px;line-height:13px;background:#8d4650">-5</div>
<div class="c" style="left:661px;top:177px;width:27px;height:12px;line-height:13px;background:#86425b">-7</div>
<div class="c" style="left:689px;top:177px;width:27px;height:12px;line-height:13px;background:#7a3c6c">-10</div>
<div class="c" style="left:382px;top:190px;width:26px;height:13px;line-height:14px;background:#c26508">9</div>
<div class="c" style="left:409px;top:190px;width:27px;height:13px;line-height:14px;background:#c46a07">10</div>
<div class="c" style="left:437px;top:190px;width:27px;height:13px;line-height:14px;background:#c46a07">10</div>
<div class="c" style="left:465px;top:190px;width:27px;height:13px;line-height:14px;background:#c46a07">10</div>
<div class="c" style="left:493px;top:190px;width:27px;height:13px;line-height:14px;background:#c46a07">10</div>
<div class="c" style="left:521px;top:190px;width:27px;height:13px;line-height:14px;background:#c06008">8</div>
<div class="c" style="left:549px;top:190px;width:27px;height:13px;line-height:14px;background:#a15034">0</div>
<div class="c" style="left:577px;top:190px;width:27px;height:13px;line-height:14px;background:#994c40">-2</div>
<div class="c" style="left:605px;top:190px;width:27px;height:13px;line-height:14px;background:#91484b">-4</div>
<div class="c" style="left:633px;top:190px;width:27px;height:13px;line-height:14px;background:#91484b">-4</div>
<div class="c" style="left:661px;top:190px;width:27px;height:13px;line-height:14px;background:#8a4456">-6</div>
<div class="c" style="left:689px;top:190px;width:27px;height:13px;line-height:14px;background:#7e3e66">-9</div>
<div class="c" style="left:382px;top:204px;width:26px;height:13px;line-height:14px;background:#c26508">9</div>
<div class="c" style="left:409px;top:204px;width:27px;height:13px;line-height:14px;background:#c46a07">10</div>
<div class="c" style="left:437px;top:204px;width:27px;height:13px;line-height:14px;background:#c46a07">10</div>
<div class="c" style="left:465px;top:204px;width:27px;height:13px;line-height:14px;background:#c46a07">10</div>
<div class="c" style="left:493px;top:204px;width:27px;height:13px;line-height:14px;background:#c46a07">10</div>
<div class="c" style="left:521px;top:204px;width:27px;height:13px;line-height:14px;background:#c46a07">10</div>
<div class="c" style="left:549px;top:204px;width:27px;height:13px;line-height:14px;background:#b85c13">6</div>
<div class="c" style="left:577px;top:204px;width:27px;height:13px;line-height:14px;background:#a95429">2</div>
<div class="c" style="left:605px;top:204px;width:27px;height:13px;line-height:14px;background:#9d4e3a">-1</div>
<div class="c" style="left:633px;top:204px;width:27px;height:13px;line-height:14px;background:#9d4e3a">-1</div>
<div class="c" style="left:661px;top:204px;width:27px;height:13px;line-height:14px;background:#954a45">-3</div>
<div class="c" style="left:689px;top:204px;width:27px;height:13px;line-height:14px;background:#8a4456">-6</div>
<div class="c" style="left:382px;top:218px;width:26px;height:13px;line-height:14px;background:#c26508">9</div>
<div class="c" style="left:409px;top:218px;width:27px;height:13px;line-height:14px;background:#c46a07">10</div>
<div class="c" style="left:437px;top:218px;width:27px;height:13px;line-height:14px;background:#c46a07">10</div>
<div class="c" style="left:465px;top:218px;width:27px;height:13px;line-height:14px;background:#c46a07">10</div>
<div class="c" style="left:493px;top:218px;width:27px;height:13px;line-height:14px;background:#c46a07">10</div>
<div class="c" style="left:521px;top:218px;width:27px;height:13px;line-height:14px;background:#c66f07">11</div>
<div class="c" style="left:549px;top:218px;width:27px;height:13px;line-height:14px;background:#c26508">9</div>
<div class="c" style="left:577px;top:218px;width:27px;height:13px;line-height:14px;background:#b0581e">4</div>
<div class="c" style="left:605px;top:218px;width:27px;height:13px;line-height:14px;background:#a5522f">1</div>
<div class="c" style="left:633px;top:218px;width:27px;height:13px;line-height:14px;background:#a5522f">1</div>
<div class="c" style="left:661px;top:218px;width:27px;height:13px;line-height:14px;background:#9d4e3a">-1</div>
<div class="c" style="left:689px;top:218px;width:27px;height:13px;line-height:14px;background:#91484b">-4</div>
<div class="c" style="left:382px;top:232px;width:26px;height:13px;line-height:14px;background:#c26508">9</div>
<div class="c" style="left:409px;top:232px;width:27px;height:13px;line-height:14px;background:#c46a07">10</div>
<div class="c" style="left:437px;top:232px;width:27px;height:13px;line-height:14px;background:#c46a07">10</div>
<div class="c" style="left:465px;top:232px;width:27px;height:13px;line-height:14px;background:#c46a07">10</div>
<div class="c" style="left:493px;top:232px;width:27px;height:13px;line-height:14px;background:#c46a07">10</div>
<div class="c" style="left:521px;top:232px;width:27px;height:13px;line-height:14px;background:#c87407">12</div>
<div class="c" style="left:549px;top:232px;width:27px;height:13px;line-height:14px;background:#c87407">12</div>
<div class="c" style="left:577px;top:232px;width:27px;height:13px;line-height:14px;background:#b85c13">6</div>
<div class="c" style="left:605px;top:232px;width:27px;height:13px;line-height:14px;background:#ad5624">3</div>
<div class="c" style="left:633px;top:232px;width:27px;height:13px;line-height:14px;background:#ad5624">3</div>
<div class="c" style="left:661px;top:232px;width:27px;height:13px;line-height:14px;background:#a5522f">1</div>
<div class="c" style="left:689px;top:232px;width:27px;height:13px;line-height:14px;background:#994c40">-2</div>
<div class="c" style="left:382px;top:246px;width:26px;height:13px;line-height:14px;background:#c87407">12</div>
<div class="c" style="left:409px;top:246px;width:27px;height:13px;line-height:14px;background:#ca7907">13</div>
<div class="c" style="left:437px;top:246px;width:27px;height:13px;line-height:14px;background:#ca7907">13</div>
<div class="c" style="left:465px;top:246px;width:27px;height:13px;line-height:14px;background:#ca7907">13</div>
<div class="c" style="left:493px;top:246px;width:27px;height:13px;line-height:14px;background:#ca7907">13</div>
<div class="c" style="left:521px;top:246px;width:27px;height:13px;line-height:14px;background:#cc7e06">14</div>
<div class="c" style="left:549px;top:246px;width:27px;height:13px;line-height:14px;background:#ca7907">13</div>
<div class="c" style="left:577px;top:246px;width:27px;height:13px;line-height:14px;background:#bc5e0e">7</div>
<div class="c" style="left:605px;top:246px;width:27px;height:13px;line-height:14px;background:#b0581e">4</div>
<div class="c" style="left:633px;top:246px;width:27px;height:13px;line-height:14px;background:#b0581e">4</div>
<div class="c" style="left:661px;top:246px;width:27px;height:13px;line-height:14px;background:#a95429">2</div>
<div class="c" style="left:689px;top:246px;width:27px;height:13px;line-height:14px;background:#9d4e3a">-1</div>
<div class="c" style="left:382px;top:260px;width:26px;height:13px;line-height:14px;background:#d08806">16</div>
<div class="c" style="left:409px;top:260px;width:27px;height:13px;line-height:14px;background:#d28d05">17</div>
<div class="c" style="left:437px;top:260px;width:27px;height:13px;line-height:14px;background:#d28d05">17</div>
<div class="c" style="left:465px;top:260px;width:27px;height:13px;line-height:14px;background:#d28d05">17</div>
<div class="c" style="left:493px;top:260px;width:27px;height:13px;line-height:14px;background:#d28d05">17</div>
<div class="c" style="left:521px;top:260px;width:27px;height:13px;line-height:14px;background:#d08806">16</div>
<div class="c" style="left:549px;top:260px;width:27px;height:13px;line-height:14px;background:#cc7e06">14</div>
<div class="c" style="left:577px;top:260px;width:27px;height:13px;line-height:14px;background:#c26508">9</div>
<div class="c" style="left:605px;top:260px;width:27px;height:13px;line-height:14px;background:#b85c13">6</div>
<div class="c" style="left:633px;top:260px;width:27px;height:13px;line-height:14px;background:#b85c13">6</div>
<div class="c" style="left:661px;top:260px;width:27px;height:13px;line-height:14px;background:#b0581e">4</div>
<div class="c" style="left:689px;top:260px;width:27px;height:13px;line-height:14px;background:#a5522f">1</div>
<div class="c" style="left:382px;top:274px;width:26px;height:13px;line-height:14px;background:#deab04">23</div>
<div class="c" style="left:409px;top:274px;width:27px;height:13px;line-height:14px;background:#e0b003">24</div>
<div class="c" style="left:437px;top:274px;width:27px;height:13px;line-height:14px;background:#e0b003">24</div>
<div class="c" style="left:465px;top:274px;width:27px;height:13px;line-height:14px;background:#e0b003">24</div>
<div class="c" style="left:493px;top:274px;width:27px;height:13px;line-height:14px;background:#dca604">22</div>
<div class="c" style="left:521px;top:274px;width:27px;height:13px;line-height:14px;background:#d89c05">20</div>
<div class="c" style="left:549px;top:274px;width:27px;height:13px;line-height:14px;background:#d08806">16</div>
<div class="c" style="left:577px;top:274px;width:27px;height:13px;line-height:14px;background:#c46a07">10</div>
<div class="c" style="left:605px;top:274px;width:27px;height:13px;line-height:14px;background:#c06008">8</div>
<div class="c" style="left:633px;top:274px;width:27px;height:13px;line-height:14px;background:#c06008">8</div>
<div class="c" style="left:661px;top:274px;width:27px;height:13px;line-height:14px;background:#b85c13">6</div>
<div class="c" style="left:689px;top:274px;width:27px;height:13px;line-height:14px;background:#ad5624">3</div>
<div class="c" style="left:382px;top:288px;width:26px;height:13px;line-height:14px;background:#e2b503">25</div>
<div class="c" style="left:409px;top:288px;width:27px;height:13px;line-height:14px;background:#e4ba03">26</div>
<div class="c" style="left:437px;top:288px;width:27px;height:13px;line-height:14px;background:#e4ba03">26</div>
<div class="c" style="left:465px;top:288px;width:27px;height:13px;line-height:14px;background:#e4ba03">26</div>
<div class="c" style="left:493px;top:288px;width:27px;height:13px;line-height:14px;background:#dca604">22</div>
<div class="c" style="left:521px;top:288px;width:27px;height:13px;line-height:14px;background:#dca604">22</div>
<div class="c" style="left:549px;top:288px;width:27px;height:13px;line-height:14px;background:#d69705">19</div>
<div class="c" style="left:577px;top:288px;width:27px;height:13px;line-height:14px;background:#d08806">16</div>
<div class="c" style="left:605px;top:288px;width:27px;height:13px;line-height:14px;background:#ca7907">13</div>
<div class="c" style="left:633px;top:288px;width:27px;height:13px;line-height:14px;background:#ca7907">13</div>
<div class="c" style="left:661px;top:288px;width:27px;height:13px;line-height:14px;background:#c66f07">11</div>
<div class="c" style="left:689px;top:288px;width:27px;height:13px;line-height:14px;background:#c06008">8</div>
<div class="c" style="left:382px;top:302px;width:26px;height:13px;line-height:14px;background:#e2b503">25</div>
<div class="c" style="left:409px;top:302px;width:27px;height:13px;line-height:14px;background:#e4ba03">26</div>
<div class="c" style="left:437px;top:302px;width:27px;height:13px;line-height:14px;background:#e4ba03">26</div>
<div class="c" style="left:465px;top:302px;width:27px;height:13px;line-height:14px;background:#e4ba03">26</div>
<div class="c" style="left:493px;top:302px;width:27px;height:13px;line-height:14px;background:#e4ba03">26</div>
<div class="c" style="left:521px;top:302px;width:27px;height:13px;line-height:14px;background:#e0b003">24</div>
<div class="c" style="left:549px;top:302px;width:27px;height:13px;line-height:14px;background:#d69705">19</div>
<div class="c" style="left:577px;top:302px;width:27px;height:13px;line-height:14px;background:#ce8306">15</div>
<div class="c" style="left:605px;top:302px;width:27px;height:13px;line-height:14px;background:#cc7e06">14</div>
<div class="c" style="left:633px;top:302px;width:27px;height:13px;line-height:14px;background:#cc7e06">14</div>
<div class="c" style="left:661px;top:302px;width:27px;height:13px;line-height:14px;background:#c87407">12</div>
<div class="c" style="left:689px;top:302px;width:27px;height:13px;line-height:14px;background:#c26508">9</div>
<div class="c" style="left:382px;top:316px;width:26px;height:13px;line-height:14px;background:#eac902">29</div>
<div class="c" style="left:409px;top:316px;width:27px;height:13px;line-height:14px;background:#ecce02">30</div>
<div class="c" style="left:437px;top:316px;width:27px;height:13px;line-height:14px;background:#ecce02">30</div>
<div class="c" style="left:465px;top:316px;width:27px;height:13px;line-height:14px;background:#ecce02">30</div>
<div class="c" style="left:493px;top:316px;width:27px;height:13px;line-height:14px;background:#e8c402">28</div>
<div class="c" style="left:521px;top:316px;width:27px;height:13px;line-height:14px;background:#e0b003">24</div>
<div class="c" style="left:549px;top:316px;width:27px;height:13px;line-height:14px;background:#dca604">22</div>
<div class="c" style="left:577px;top:316px;width:27px;height:13px;line-height:14px;background:#d28d05">17</div>
<div class="c" style="left:605px;top:316px;width:27px;height:13px;line-height:14px;background:#ca7907">13</div>
<div class="c" style="left:633px;top:316px;width:27px;height:13px;line-height:14px;background:#c06008">8</div>
<div class="c" style="left:661px;top:316px;width:27px;height:13px;line-height:14px;background:#c06008">8</div>
<div class="c" style="left:689px;top:316px;width:27px;height:13px;line-height:14px;background:#c06008">8</div>
<div class="c" style="left:382px;top:330px;width:26px;height:13px;line-height:14px;background:#eed301">31</div>
<div class="c" style="left:409px;top:330px;width:27px;height:13px;line-height:14px;background:#f0d801">32</div>
<div class="c" style="left:437px;top:330px;width:27px;height:13px;line-height:14px;background:#f0d801">32</div>
<div class="c" style="left:465px;top:330px;width:27px;height:13px;line-height:14px;background:#f0d801">32</div>
<div class="c" style="left:493px;top:330px;width:27px;height:13px;line-height:14px;background:#ecce02">30</div>
<div class="c" style="left:521px;top:330px;width:27px;height:13px;line-height:14px;background:#e4ba03">26</div>
<div class="c" style="left:549px;top:330px;width:27px;height:13px;line-height:14px;background:#e2b503">25</div>
<div class="c" style="left:577px;top:330px;width:27px;height:13px;line-height:14px;background:#e0b003">24</div>
<div class="c" style="left:605px;top:330px;width:27px;height:13px;line-height:14px;background:#daa104">21</div>
<div class="c" style="left:633px;top:330px;width:27px;height:13px;line-height:14px;background:#d69705">19</div>
<div class="c" style="left:661px;top:330px;width:27px;height:13px;line-height:14px;background:#d28d05">17</div>
<div class="c" style="left:689px;top:330px;width:27px;height:13px;line-height:14px;background:#cc7e06">14</div>
<div class="c" style="left:382px;top:344px;width:26px;height:13px;line-height:14px;background:#eed301">31</div>
<div class="c" style="left:409px;top:344px;width:27px;height:13px;line-height:14px;background:#f0d801">32</div>
<div class="c" style="left:437px;top:344px;width:27px;height:13px;line-height:14px;background:#f0d801">32</div>
<div class="c" style="left:465px;top:344px;width:27px;height:13px;line-height:14px;background:#f0d801">32</div>
<div class="c" style="left:493px;top:344px;width:27px;height:13px;line-height:14px;background:#ecce02">30</div>
<div class="c" style="left:521px;top:344px;width:27px;height:13px;line-height:14px;background:#e8c402">28</div>
<div class="c" style="left:549px;top:344px;width:27px;height:13px;line-height:14px;background:#e2b503">25</div>
<div class="c" style="left:577px;top:344px;width:27px;height:13px;line-height:14px;background:#d89c05">20</div>
<div class="c" style="left:605px;top:344px;width:27px;height:13px;line-height:14px;background:#d08806">16</div>
<div class="c" style="left:633px;top:344px;width:27px;height:13px;line-height:14px;background:#d08806">16</div>
<div class="c" style="left:661px;top:344px;width:27px;height:13px;line-height:14px;background:#ce8306">15</div>
<div class="c" style="left:689px;top:344px;width:27px;height:13px;line-height:14px;background:#c87407">12</div>
<div class="c" style="left:382px;top:358px;width:26px;height:13px;line-height:14px;background:#eed301">31</div>
<div class="c" style="left:409px;top:358px;width:27px;height:13px;line-height:14px;background:#f0d801">32</div>
<div class="c" style="left:437px;top:358px;width:27px;height:13px;line-height:14px;background:#f0d801">32</div>
<div class="c" style="left:465px;top:358px;width:27px;height:13px;line-height:14px;background:#f0d801">32</div>
<div class="c" style="left:493px;top:358px;width:27px;height:13px;line-height:14px;background:#ecce02">30</div>
<div class="c" style="left:521px;top:358px;width:27px;height:13px;line-height:14px;background:#e8c402">28</div>
<div class="c" style="left:549px;top:358px;width:27px;height:13px;line-height:14px;background:#e6bf03">27</div>
<div class="c" style="left:577px;top:358px;width:27px;height:13px;line-height:14px;background:#deab04">23</div>
<div class="c" style="left:605px;top:358px;width:27px;height:13px;line-height:14px;background:#daa104">21</div>
<div class="c" style="left:633px;top:358px;width:27px;height:13px;line-height:14px;background:#d89c05">20</div>
<div class="c" style="left:661px;top:358px;width:27px;height:13px;line-height:14px;background:#d49205">18</div>
<div class="c" style="left:689px;top:358px;width:27px;height:13px;line-height:14px;background:#ce8306">15</div>
<div class="c" style="left:382px;top:372px;width:26px;height:13px;line-height:14px;background:#eed301">31</div>
<div class="c" style="left:409px;top:372px;width:27px;height:13px;line-height:14px;background:#f0d801">32</div>
<div class="c" style="left:437px;top:372px;width:27px;height:13px;line-height:14px;background:#f0d801">32</div>
<div class="c" style="left:465px;top:372px;width:27px;height:13px;line-height:14px;background:#f0d801">32</div>
<div class="c" style="left:493px;top:372px;width:27px;height:13px;line-height:14px;background:#ecce02">30</div>
<div class="c" style="left:521px;top:372px;width:27px;height:13px;line-height:14px;background:#e8c402">28</div>
<div class="c" style="left:549px;top:372px;width:27px;height:13px;line-height:14px;background:#e4ba03">26</div>
<div class="c" style="left:577px;top:372px;width:27px;height:13px;line-height:14px;background:#d89c05">20</div>
<div class="c" style="left:605px;top:372px;width:27px;height:13px;line-height:14px;background:#d49205">18</div>
<div class="c" style="left:633px;top:372px;width:27px;height:13px;line-height:14px;background:#d49205">18</div>
<div class="c" style="left:661px;top:372px;width:27px;height:13px;line-height:14px;background:#d08806">16</div>
<div class="c" style="left:689px;top:372px;width:27px;height:13px;line-height:14px;background:#ca7907">13</div>
<div class="c" style="left:382px;top:386px;width:26px;height:13px;line-height:14px;background:#eed301">31</div>
<div class="c" style="left:409px;top:386px;width:27px;height:13px;line-height:14px;background:#f0d801">32</div>
<div class="c" style="left:437px;top:386px;width:27px;height:13px;line-height:14px;background:#f0d801">32</div>
<div class="c" style="left:465px;top:386px;width:27px;height:13px;line-height:14px;background:#f0d801">32</div>
<div class="c" style="left:493px;top:386px;width:27px;height:13px;line-height:14px;background:#f0d801">32</div>
<div class="c" style="left:521px;top:386px;width:27px;height:13px;line-height:14px;background:#ecce02">30</div>
<div class="c" style="left:549px;top:386px;width:27px;height:13px;line-height:14px;background:#e4ba03">26</div>
<div class="c" style="left:577px;top:386px;width:27px;height:13px;line-height:14px;background:#d49205">18</div>
<div class="c" style="left:605px;top:386px;width:27px;height:13px;line-height:14px;background:#d28d05">17</div>
<div class="c" style="left:633px;top:386px;width:27px;height:13px;line-height:14px;background:#d08806">16</div>
<div class="c" style="left:661px;top:386px;width:27px;height:13px;line-height:14px;background:#cc7e06">14</div>
<div class="c" style="left:689px;top:386px;width:27px;height:13px;line-height:14px;background:#c66f07">11</div>
<div class="c" style="left:382px;top:400px;width:26px;height:13px;line-height:14px;background:#f6e700">35</div>
<div class="c" style="left:409px;top:400px;width:27px;height:13px;line-height:14px;background:#f8ec00">36</div>
<div class="c" style="left:437px;top:400px;width:27px;height:13px;line-height:14px;background:#f8ec00">36</div>
<div class="c" style="left:465px;top:400px;width:27px;height:13px;line-height:14px;background:#f8ec00">36</div>
<div class="c" style="left:493px;top:400px;width:27px;height:13px;line-height:14px;background:#f8ec00">36</div>
<div class="c" style="left:521px;top:400px;width:27px;height:13px;line-height:14px;background:#ecce02">30</div>
<div class="c" style="left:549px;top:400px;width:27px;height:13px;line-height:14px;background:#e8c402">28</div>
<div class="c" style="left:577px;top:400px;width:27px;height:13px;line-height:14px;background:#e0b003">24</div>
<div class="c" style="left:605px;top:400px;width:27px;height:13px;line-height:14px;background:#daa104">21</div>
<div class="c" style="left:633px;top:400px;width:27px;height:13px;line-height:14px;background:#d89c05">20</div>
<div class="c" style="left:661px;top:400px;width:27px;height:13px;line-height:14px;background:#d49205">18</div>
<div class="c" style="left:689px;top:400px;width:27px;height:13px;line-height:14px;background:#ce8306">15</div>
<div class="c" style="left:382px;top:414px;width:26px;height:13px;line-height:14px;background:#f6e700">35</div>
<div class="c" style="left:409px;top:414px;width:27px;height:13px;line-height:14px;background:#f8ec00">36</div>
<div class="c" style="left:437px;top:414px;width:27px;height:13px;line-height:14px;background:#f8ec00">36</div>
<div class="c" style="left:465px;top:414px;width:27px;height:13px;line-height:14px;background:#f8ec00">36</div>
<div class="c" style="left:493px;top:414px;width:27px;height:13px;line-height:14px;background:#f8ec00">36</div>
<div class="c" style="left:521px;top:414px;width:27px;height:13px;line-height:14px;background:#f2dd01">33</div>
<div class="c" style="left:549px;top:414px;width:27px;height:13px;line-height:14px;background:#ecce02">30</div>
<div class="c" style="left:577px;top:414px;width:27px;height:13px;line-height:14px;background:#e4ba03">26</div>
<div class="c" style="left:605px;top:414px;width:27px;height:13px;line-height:14px;background:#e4ba03">26</div>
<div class="c" style="left:633px;top:414px;width:27px;height:13px;line-height:14px;background:#e4ba03">26</div>
<div class="c" style="left:661px;top:414px;width:27px;height:13px;line-height:14px;background:#e0b003">24</div>
<div class="c" style="left:689px;top:414px;width:27px;height:13px;line-height:14px;background:#daa104">21</div>
<div class="c" style="left:382px;top:428px;width:26px;height:13px;line-height:14px;background:#f6e700">35</div>
<div class="c" style="left:409px;top:428px;width:27px;height:13px;line-height:14px;background:#f8ec00">36</div>
<div class="c" style="left:437px;top:428px;width:27px;height:13px;line-height:14px;background:#f8ec00">36</div>
<div class="c" style="left:465px;top:428px;width:27px;height:13px;line-height:14px;background:#f8ec00">36</div>
<div class="c" style="left:493px;top:428px;width:27px;height:13px;line-height:14px;background:#f8ec00">36</div>
<div class="c" style="left:521px;top:428px;width:27px;height:13px;line-height:14px;background:#f2dd01">33</div>
<div class="c" style="left:549px;top:428px;width:27px;height:13px;line-height:14px;background:#ecce02">30</div>
<div class="c" style="left:577px;top:428px;width:27px;height:13px;line-height:14px;background:#e4ba03">26</div>
<div class="c" style="left:605px;top:428px;width:27px;height:13px;line-height:14px;background:#e4ba03">26</div>
<div class="c" style="left:633px;top:428px;width:27px;height:13px;line-height:14px;background:#e4ba03">26</div>
<div class="c" style="left:661px;top:428px;width:27px;height:13px;line-height:14px;background:#e0b003">24</div>
<div class="c" style="left:689px;top:428px;width:27px;height:13px;line-height:14px;background:#daa104">21</div>
<div class="c" style="left:382px;top:442px;width:26px;height:13px;line-height:14px;background:#f6e700">35</div>
<div class="c" style="left:409px;top:442px;width:27px;height:13px;line-height:14px;background:#f8ec00">36</div>
<div class="c" style="left:437px;top:442px;width:27px;height:13px;line-height:14px;background:#f8ec00">36</div>
<div class="c" style="left:465px;top:442px;width:27px;height:13px;line-height:14px;background:#f8ec00">36</div>
<div class="c" style="left:493px;top:442px;width:27px;height:13px;line-height:14px;background:#f8ec00">36</div>
<div class="c" style="left:521px;top:442px;width:27px;height:13px;line-height:14px;background:#f2dd01">33</div>
<div class="c" style="left:549px;top:442px;width:27px;height:13px;line-height:14px;background:#ecce02">30</div>
<div class="c" style="left:577px;top:442px;width:27px;height:13px;line-height:14px;background:#e4ba03">26</div>
<div class="c" style="left:605px;top:442px;width:27px;height:13px;line-height:14px;background:#e4ba03">26</div>
<div class="c" style="left:633px;top:442px;width:27px;height:13px;line-height:14px;background:#e4ba03">26</div>
<div class="c" style="left:661px;top:442px;width:27px;height:13px;line-height:14px;background:#e0b003">24</div>
<div class="c" style="left:689px;top:442px;width:27px;height:13px;line-height:14px;background:#daa104">21</div>
<div class="c" style="left:382px;top:456px;width:26px;height:13px;line-height:14px;background:#f6e700">35</div>
<div class="c" style="left:409px;top:456px;width:27px;height:13px;line-height:14px;background:#f8ec00">36</div>
<div class="c" style="left:437px;top:456px;width:27px;height:13px;line-height:14px;background:#f8ec00">36</div>
<div class="c" style="left:465px;top:456px;width:27px;height:13px;line-height:14px;background:#f8ec00">36</div>
<div class="c" style="left:493px;top:456px;width:27px;height:13px;line-height:14px;background:#f8ec00">36</div>
<div class="c" style="left:521px;top:456px;width:27px;height:13px;line-height:14px;background:#f2dd01">33</div>
<div class="c" style="left:549px;top:456px;width:27px;height:13px;line-height:14px;background:#ecce02">30</div>
<div class="c" style="left:577px;top:456px;width:27px;height:13px;line-height:14px;background:#e4ba03">26</div>
<div class="c" style="left:605px;top:456px;width:27px;height:13px;line-height:14px;background:#e4ba03">26</div>
<div class="c" style="left:633px;top:456px;width:27px;height:13px;line-height:14px;background:#e4ba03">26</div>
<div class="c" style="left:661px;top:456px;width:27px;height:13px;line-height:14px;background:#e0b003">24</div>
<div class="c" style="left:689px;top:456px;width:27px;height:13px;line-height:14px;background:#daa104">21</div>
<div style="position:absolute;left:380px;top:475px;width:338px;height:13px;background:#a19f9b"></div>
<div style="position:absolute;left:380px;top:474.8px;width:338px;height:14px;text-align:center;font-size:11px;line-height:14px;color:#f4f2ea;transform:scaleX(0.97)">degrees</div>
<div style="position:absolute;left:738px;top:89px;width:410px;height:310px;background:#e3e7eb;border:1px solid #181818;box-shadow:0 0 7px 1px rgba(0,0,0,0.5),4px 6px 13px 1px rgba(0,0,0,0.6);"></div>
<div style="position:absolute;left:739px;top:90px;width:408px;height:308px;border:1px solid rgba(255,255,255,0.8)"></div>
<div style="position:absolute;left:747px;top:95.38px;font-family:'Liberation Sans', sans-serif;font-size:12.5px;line-height:14.37px;white-space:pre;color:#000;transform:scaleX(0.963);transform-origin:0 0;-webkit-text-stroke:0.2px #000;">High Octane Fuel Map-colt.bin</div>
<div style="position:absolute;left:743px;top:112px;width:400px;height:1px;background:rgba(255,255,255,0.85)"></div>
<div style="position:absolute;left:744px;top:113px;width:398px;height:280px;background:#efebe6;border:1px solid #101010;box-shadow:inset 0 0 0 1px #fbfaf8;outline:1px solid rgba(255,255,255,0.85)"></div>
<div style="position:absolute;left:745px;top:114px;width:396px;height:1px;background:#fff"></div>
<div style="position:absolute;left:1126px;top:94px;width:16px;height:16px;border:1px solid #5a5a5a;border-radius:3px;background:linear-gradient(#f4b4a0,#e68a6c 45%,#c8502c 50%,#d86440 70%,#eca088)"></div>
<svg style="position:absolute;left:1130px;top:98px" width="10" height="9" viewBox="0 0 10 9"><path d="M2.6 2.4 L7.4 6.6 M7.4 2.4 L2.6 6.6" stroke="#2a2e48" stroke-width="3.4" stroke-linecap="round"/><path d="M2.6 2.4 L7.4 6.6 M7.4 2.4 L2.6 6.6" stroke="#fff" stroke-width="1.7" stroke-linecap="round"/></svg>
<div style="position:absolute;left:756px;top:117.97px;font-family:'Liberation Sans', sans-serif;font-size:12.5px;line-height:14.37px;white-space:pre;color:#000;transform:scaleX(0.89);transform-origin:0 0;-webkit-text-stroke:0.2px #000;"><span style="text-decoration:underline;text-underline-offset:2px;text-decoration-thickness:1px">E</span>dit</div>
<div style="position:absolute;left:790px;top:117.97px;font-family:'Liberation Sans', sans-serif;font-size:12.5px;line-height:14.37px;white-space:pre;color:#000;transform:scaleX(0.89);transform-origin:0 0;-webkit-text-stroke:0.2px #000;"><span style="text-decoration:underline;text-underline-offset:2px;text-decoration-thickness:1px">V</span>iew</div>
<div style="position:absolute;left:829px;top:117.97px;font-family:'Liberation Sans', sans-serif;font-size:12.5px;line-height:14.37px;white-space:pre;color:#000;transform:scaleX(0.89);transform-origin:0 0;-webkit-text-stroke:0.2px #000;"><span style="text-decoration:underline;text-underline-offset:2px;text-decoration-thickness:1px">H</span>elp</div>
<div style="position:absolute;left:745px;top:134px;width:396px;height:1px;background:#d9d5cf"></div>
<div style="position:absolute;left:745px;top:135px;width:396px;height:1px;background:#f8f6f3"></div>
<div style="position:absolute;left:813px;top:137px;width:317px;height:13px;background:#a19f9b"></div>
<div style="position:absolute;left:813px;top:136.8px;width:317px;height:14px;text-align:center;font-size:11px;line-height:14px;color:#f4f2ea;transform:scaleX(0.97)">Load (%)</div>
<div style="position:absolute;left:813px;top:154px;width:317px;height:16px;background:#c8c8c8;border:2px solid #c4c0b9"></div>
<div class="c" style="left:815px;top:156px;width:33px;height:12px;line-height:13px;background:#0000f0">60</div>
<div class="c" style="left:849px;top:156px;width:34px;height:12px;line-height:13px;background:#ffffff">20480</div>
<div class="c" style="left:884px;top:156px;width:34px;height:12px;line-height:13px;background:#ffffff">10845</div>
<div class="c" style="left:919px;top:156px;width:34px;height:12px;line-height:13px;background:#ffffff">20480</div>
<div class="c" style="left:954px;top:156px;width:34px;height:12px;line-height:13px;background:#ffffff">10843</div>
<div class="c" style="left:989px;top:156px;width:34px;height:12px;line-height:13px;background:#08a8f8">4</div>
<div class="c" style="left:1024px;top:156px;width:34px;height:12px;line-height:13px;background:#0848f8">36</div>
<div class="c" style="left:1059px;top:156px;width:34px;height:12px;line-height:13px;background:#0848f0">37</div>
<div class="c" style="left:1094px;top:156px;width:34px;height:12px;line-height:13px;background:#0840f0">38</div>
<div style="position:absolute;left:748px;top:174px;width:13px;height:198px;background:#a19f9b"></div>
<div style="position:absolute;left:655.5px;top:266.0px;width:198px;height:14px;transform:rotate(-90deg) scaleX(0.88);text-align:center;font-size:11px;line-height:14px;color:#f4f4f4;white-space:nowrap">RPM (RPM)</div>
<div style="position:absolute;left:765px;top:174px;width:44px;height:198px;background:#c8c8c8;border:2px solid #c4c0b9"></div>
<div class="c" style="left:767px;top:176px;width:40px;height:12px;line-height:13px;background:#10a0f8">301</div>
<div class="c" style="left:767px;top:189px;width:40px;height:13px;line-height:14px;background:#1090f8">398</div>
<div class="c" style="left:767px;top:203px;width:40px;height:13px;line-height:14px;background:#1080f8">500</div>
<div class="c" style="left:767px;top:217px;width:40px;height:13px;line-height:14px;background:#1078f8">602</div>
<div class="c" style="left:767px;top:231px;width:40px;height:13px;line-height:14px;background:#1068f8">699</div>
<div class="c" style="left:767px;top:245px;width:40px;height:13px;line-height:14px;background:#1060f8">801</div>
<div class="c" style="left:767px;top:259px;width:40px;height:13px;line-height:14px;background:#1058f8">898</div>
<div class="c" style="left:767px;top:273px;width:40px;height:13px;line-height:14px;background:#0848f0">996</div>
<div class="c" style="left:767px;top:287px;width:40px;height:13px;line-height:14px;background:#ffffff">255996</div>
<div class="c" style="left:767px;top:301px;width:40px;height:13px;line-height:14px;background:#ffffff">135570</div>
<div class="c" style="left:767px;top:315px;width:40px;height:13px;line-height:14px;background:#ffffff">255996</div>
<div class="c" style="left:767px;top:329px;width:40px;height:13px;line-height:14px;background:#ffffff">136352</div>
<div class="c" style="left:767px;top:343px;width:40px;height:13px;line-height:14px;background:#10b0f8">27</div>
<div class="c" style="left:767px;top:357px;width:40px;height:13px;line-height:14px;background:#10b0f8">0</div>
<div style="position:absolute;left:813px;top:174px;width:317px;height:198px;background:#c8c8c8;border:2px solid #c4c0b9"></div>
<div class="c" style="left:815px;top:176px;width:33px;height:12px;line-height:13px;background:#ffffff">inf</div>
<div class="c" style="left:849px;top:176px;width:34px;height:12px;line-height:13px;background:#08a8f0">7.4</div>
<div class="c" style="left:884px;top:176px;width:34px;height:12px;line-height:13px;background:#0820e8">9.8</div>
<div class="c" style="left:919px;top:176px;width:34px;height:12px;line-height:13px;background:#ffffff">209.1</div>
<div class="c" style="left:954px;top:176px;width:34px;height:12px;line-height:13px;background:#1090f0">8.4</div>
<div class="c" style="left:989px;top:176px;width:34px;height:12px;line-height:13px;background:#ffffff">376.3</div>
<div class="c" style="left:1024px;top:176px;width:34px;height:12px;line-height:13px;background:#6c3c70">13.1</div>
<div class="c" style="left:1059px;top:176px;width:34px;height:12px;line-height:13px;background:#0850f0">9.2</div>
<div class="c" style="left:1094px;top:176px;width:34px;height:12px;line-height:13px;background:#ffffff">inf</div>
<div class="c" style="left:815px;top:189px;width:33px;height:13px;line-height:14px;background:#ffffff">376.3</div>
<div class="c" style="left:849px;top:189px;width:34px;height:13px;line-height:14px;background:#8c4c3c">13.8</div>
<div class="c" style="left:884px;top:189px;width:34px;height:13px;line-height:14px;background:#ffffff">inf</div>
<div class="c" style="left:919px;top:189px;width:34px;height:13px;line-height:14px;background:#ffffff">inf</div>
<div class="c" style="left:954px;top:189px;width:34px;height:13px;line-height:14px;background:#ffffff">inf</div>
<div class="c" style="left:989px;top:189px;width:34px;height:13px;line-height:14px;background:#ffffff">inf</div>
<div class="c" style="left:1024px;top:189px;width:34px;height:13px;line-height:14px;background:#08a8f0">7.4</div>
<div class="c" style="left:1059px;top:189px;width:34px;height:13px;line-height:14px;background:#08a8f0">7.4</div>
<div class="c" style="left:1094px;top:189px;width:34px;height:13px;line-height:14px;background:#ffffff">1881.6</div>
<div class="c" style="left:815px;top:203px;width:33px;height:13px;line-height:14px;background:#ffffff">inf</div>
<div class="c" style="left:849px;top:203px;width:34px;height:13px;line-height:14px;background:#ffffff">85.5</div>
<div class="c" style="left:884px;top:203px;width:34px;height:13px;line-height:14px;background:#1090f0">8.4</div>
<div class="c" style="left:919px;top:203px;width:34px;height:13px;line-height:14px;background:#b85c10">14.7</div>
<div class="c" style="left:954px;top:203px;width:34px;height:13px;line-height:14px;background:#10a0f0">7.8</div>
<div class="c" style="left:989px;top:203px;width:34px;height:13px;line-height:14px;background:#ffffff">20.2</div>
<div class="c" style="left:1024px;top:203px;width:34px;height:13px;line-height:14px;background:#08a8f0">7.4</div>
<div class="c" style="left:1059px;top:203px;width:34px;height:13px;line-height:14px;background:#08a8f0">7.4</div>
<div class="c" style="left:1094px;top:203px;width:34px;height:13px;line-height:14px;background:#b85c10">14.7</div>
<div class="c" style="left:815px;top:217px;width:33px;height:13px;line-height:14px;background:#ffffff">313.6</div>
<div class="c" style="left:849px;top:217px;width:34px;height:13px;line-height:14px;background:#ffffff">inf</div>
<div class="c" style="left:884px;top:217px;width:34px;height:13px;line-height:14px;background:#ffffff">inf</div>
<div class="c" style="left:919px;top:217px;width:34px;height:13px;line-height:14px;background:#ffffff">inf</div>
<div class="c" style="left:954px;top:217px;width:34px;height:13px;line-height:14px;background:#ffffff">inf</div>
<div class="c" style="left:989px;top:217px;width:34px;height:13px;line-height:14px;background:#ffffff">inf</div>
<div class="c" style="left:1024px;top:217px;width:34px;height:13px;line-height:14px;background:#8c4c3c">13.8</div>
<div class="c" style="left:1059px;top:217px;width:34px;height:13px;line-height:14px;background:#904c38">13.9</div>
<div class="c" style="left:1094px;top:217px;width:34px;height:13px;line-height:14px;background:#ffffff">940.8</div>
<div class="c" style="left:815px;top:231px;width:33px;height:13px;line-height:14px;background:#ffffff">inf</div>
<div class="c" style="left:849px;top:231px;width:34px;height:13px;line-height:14px;background:#ffffff">268.8</div>
<div class="c" style="left:884px;top:231px;width:34px;height:13px;line-height:14px;background:#08a8f0">7.4</div>
<div class="c" style="left:919px;top:231px;width:34px;height:13px;line-height:14px;background:#6c3c70">13.1</div>
<div class="c" style="left:954px;top:231px;width:34px;height:13px;line-height:14px;background:#08a8f0">7.4</div>
<div class="c" style="left:989px;top:231px;width:34px;height:13px;line-height:14px;background:#c06808">15.1</div>
<div class="c" style="left:1024px;top:231px;width:34px;height:13px;line-height:14px;background:#ffffff">156.8</div>
<div class="c" style="left:1059px;top:231px;width:34px;height:13px;line-height:14px;background:#6c3c70">13.1</div>
<div class="c" style="left:1094px;top:231px;width:34px;height:13px;line-height:14px;background:#ffffff">inf</div>
<div class="c" style="left:815px;top:245px;width:33px;height:13px;line-height:14px;background:#ffffff">268.8</div>
<div class="c" style="left:849px;top:245px;width:34px;height:13px;line-height:14px;background:#ffffff">inf</div>
<div class="c" style="left:884px;top:245px;width:34px;height:13px;line-height:14px;background:#08a8f0">7.4</div>
<div class="c" style="left:919px;top:245px;width:34px;height:13px;line-height:14px;background:#ffffff">inf</div>
<div class="c" style="left:954px;top:245px;width:34px;height:13px;line-height:14px;background:#08a8f0">7.4</div>
<div class="c" style="left:989px;top:245px;width:34px;height:13px;line-height:14px;background:#ffffff">inf</div>
<div class="c" style="left:1024px;top:245px;width:34px;height:13px;line-height:14px;background:#ffffff">inf</div>
<div class="c" style="left:1059px;top:245px;width:34px;height:13px;line-height:14px;background:#08a8f0">7.4</div>
<div class="c" style="left:1094px;top:245px;width:34px;height:13px;line-height:14px;background:#ffffff">940.8</div>
<div class="c" style="left:815px;top:259px;width:33px;height:13px;line-height:14px;background:#ffffff">inf</div>
<div class="c" style="left:849px;top:259px;width:34px;height:13px;line-height:14px;background:#ffffff">29.4</div>
<div class="c" style="left:884px;top:259px;width:34px;height:13px;line-height:14px;background:#08a8f0">7.4</div>
<div class="c" style="left:919px;top:259px;width:34px;height:13px;line-height:14px;background:#3820b0">11.8</div>
<div class="c" style="left:954px;top:259px;width:34px;height:13px;line-height:14px;background:#08a8f0">7.4</div>
<div class="c" style="left:989px;top:259px;width:34px;height:13px;line-height:14px;background:#4028a8">12.0</div>
<div class="c" style="left:1024px;top:259px;width:34px;height:13px;line-height:14px;background:#ffffff">470.4</div>
<div class="c" style="left:1059px;top:259px;width:34px;height:13px;line-height:14px;background:#08a8f0">7.4</div>
<div class="c" style="left:1094px;top:259px;width:34px;height:13px;line-height:14px;background:#b85c10">14.7</div>
<div class="c" style="left:815px;top:273px;width:33px;height:13px;line-height:14px;background:#ffffff">235.2</div>
<div class="c" style="left:849px;top:273px;width:34px;height:13px;line-height:14px;background:#ffffff">inf</div>
<div class="c" style="left:884px;top:273px;width:34px;height:13px;line-height:14px;background:#904c38">13.9</div>
<div class="c" style="left:919px;top:273px;width:34px;height:13px;line-height:14px;background:#ffffff">inf</div>
<div class="c" style="left:954px;top:273px;width:34px;height:13px;line-height:14px;background:#904c38">13.9</div>
<div class="c" style="left:989px;top:273px;width:34px;height:13px;line-height:14px;background:#ffffff">inf</div>
<div class="c" style="left:1024px;top:273px;width:34px;height:13px;line-height:14px;background:#ffffff">inf</div>
<div class="c" style="left:1059px;top:273px;width:34px;height:13px;line-height:14px;background:#8c4c3c">13.8</div>
<div class="c" style="left:1094px;top:273px;width:34px;height:13px;line-height:14px;background:#ffffff">627.2</div>
<div class="c" style="left:815px;top:287px;width:33px;height:13px;line-height:14px;background:#ffffff">inf</div>
<div class="c" style="left:849px;top:287px;width:34px;height:13px;line-height:14px;background:#fffff0">19.6</div>
<div class="c" style="left:884px;top:287px;width:34px;height:13px;line-height:14px;background:#6c3c70">13.1</div>
<div class="c" style="left:919px;top:287px;width:34px;height:13px;line-height:14px;background:#1010e0">10.7</div>
<div class="c" style="left:954px;top:287px;width:34px;height:13px;line-height:14px;background:#6c3c70">13.1</div>
<div class="c" style="left:989px;top:287px;width:34px;height:13px;line-height:14px;background:#2010d0">10.9</div>
<div class="c" style="left:1024px;top:287px;width:34px;height:13px;line-height:14px;background:#4028a8">12.0</div>
<div class="c" style="left:1059px;top:287px;width:34px;height:13px;line-height:14px;background:#ffffff">20.0</div>
<div class="c" style="left:1094px;top:287px;width:34px;height:13px;line-height:14px;background:#ffffff">inf</div>
<div class="c" style="left:815px;top:301px;width:33px;height:13px;line-height:14px;background:#08a8f0">7.4</div>
<div class="c" style="left:849px;top:301px;width:34px;height:13px;line-height:14px;background:#ffffff">inf</div>
<div class="c" style="left:884px;top:301px;width:34px;height:13px;line-height:14px;background:#08a8f0">7.4</div>
<div class="c" style="left:919px;top:301px;width:34px;height:13px;line-height:14px;background:#ffffff">inf</div>
<div class="c" style="left:954px;top:301px;width:34px;height:13px;line-height:14px;background:#08a8f0">7.4</div>
<div class="c" style="left:989px;top:301px;width:34px;height:13px;line-height:14px;background:#ffffff">inf</div>
<div class="c" style="left:1024px;top:301px;width:34px;height:13px;line-height:14px;background:#ffffff">inf</div>
<div class="c" style="left:1059px;top:301px;width:34px;height:13px;line-height:14px;background:#ffffff">inf</div>
<div class="c" style="left:1094px;top:301px;width:34px;height:13px;line-height:14px;background:#ffffff">627.2</div>
<div class="c" style="left:815px;top:315px;width:33px;height:13px;line-height:14px;background:#08a8f0">7.4</div>
<div class="c" style="left:849px;top:315px;width:34px;height:13px;line-height:14px;background:#b85c10">14.7</div>
<div class="c" style="left:884px;top:315px;width:34px;height:13px;line-height:14px;background:#08a8f0">7.4</div>
<div class="c" style="left:919px;top:315px;width:34px;height:13px;line-height:14px;background:#0820e8">9.8</div>
<div class="c" style="left:954px;top:315px;width:34px;height:13px;line-height:14px;background:#08a8f0">7.4</div>
<div class="c" style="left:989px;top:315px;width:34px;height:13px;line-height:14px;background:#0818e0">10.0</div>
<div class="c" style="left:1024px;top:315px;width:34px;height:13px;line-height:14px;background:#2010d0">10.9</div>
<div class="c" style="left:1059px;top:315px;width:34px;height:13px;line-height:14px;background:#ffffff">134.4</div>
<div class="c" style="left:1094px;top:315px;width:34px;height:13px;line-height:14px;background:#b85c10">14.7</div>
<div class="c" style="left:815px;top:329px;width:33px;height:13px;line-height:14px;background:#904c38">13.9</div>
<div class="c" style="left:849px;top:329px;width:34px;height:13px;line-height:14px;background:#ffffff">inf</div>
<div class="c" style="left:884px;top:329px;width:34px;height:13px;line-height:14px;background:#8c4c3c">13.8</div>
<div class="c" style="left:919px;top:329px;width:34px;height:13px;line-height:14px;background:#ffffff">inf</div>
<div class="c" style="left:954px;top:329px;width:34px;height:13px;line-height:14px;background:#8c4c3c">13.8</div>
<div class="c" style="left:989px;top:329px;width:34px;height:13px;line-height:14px;background:#08a8f0">7.4</div>
<div class="c" style="left:1024px;top:329px;width:34px;height:13px;line-height:14px;background:#ffffff">inf</div>
<div class="c" style="left:1059px;top:329px;width:34px;height:13px;line-height:14px;background:#ffffff">inf</div>
<div class="c" style="left:1094px;top:329px;width:34px;height:13px;line-height:14px;background:#ffffff">470.4</div>
<div class="c" style="left:815px;top:343px;width:33px;height:13px;line-height:14px;background:#6c3c70">13.1</div>
<div class="c" style="left:849px;top:343px;width:34px;height:13px;line-height:14px;background:#3820b0">11.8</div>
<div class="c" style="left:884px;top:343px;width:34px;height:13px;line-height:14px;background:#ffffff">85.5</div>
<div class="c" style="left:919px;top:343px;width:34px;height:13px;line-height:14px;background:#0868f8">9.0</div>
<div class="c" style="left:954px;top:343px;width:34px;height:13px;line-height:14px;background:#ffffff">156.8</div>
<div class="c" style="left:989px;top:343px;width:34px;height:13px;line-height:14px;background:#08a8f0">7.4</div>
<div class="c" style="left:1024px;top:343px;width:34px;height:13px;line-height:14px;background:#0818e0">10.0</div>
<div class="c" style="left:1059px;top:343px;width:34px;height:13px;line-height:14px;background:#b85c10">14.7</div>
<div class="c" style="left:1094px;top:343px;width:34px;height:13px;line-height:14px;background:#ffffff">inf</div>
<div class="c" style="left:815px;top:357px;width:33px;height:13px;line-height:14px;background:#08a8f0">7.4</div>
<div class="c" style="left:849px;top:357px;width:34px;height:13px;line-height:14px;background:#ffffff">inf</div>
<div class="c" style="left:884px;top:357px;width:34px;height:13px;line-height:14px;background:#ffffff">inf</div>
<div class="c" style="left:919px;top:357px;width:34px;height:13px;line-height:14px;background:#ffffff">inf</div>
<div class="c" style="left:954px;top:357px;width:34px;height:13px;line-height:14px;background:#ffffff">inf</div>
<div class="c" style="left:989px;top:357px;width:34px;height:13px;line-height:14px;background:#904c38">13.9</div>
<div class="c" style="left:1024px;top:357px;width:34px;height:13px;line-height:14px;background:#ffffff">inf</div>
<div class="c" style="left:1059px;top:357px;width:34px;height:13px;line-height:14px;background:#ffffff">1881.6</div>
<div class="c" style="left:1094px;top:357px;width:34px;height:13px;line-height:14px;background:#ffffff">470.4</div>
<div style="position:absolute;left:813px;top:376px;width:317px;height:13px;background:#a19f9b"></div>
<div style="position:absolute;left:813px;top:375.8px;width:317px;height:14px;text-align:center;font-size:11px;line-height:14px;color:#f4f2ea;transform:scaleX(0.97)">AFR</div>
<svg style="position:absolute;left:0;top:28px" width="345" height="45" viewBox="0 0 345 45"><defs>
<linearGradient id="chipg" x1="0" y1="0" x2="1" y2="1"><stop offset="0" stop-color="#ececec"/><stop offset="0.5" stop-color="#c4c4c4"/><stop offset="1" stop-color="#a4a4a4"/></linearGradient>
<linearGradient id="arrg" x1="0" y1="0" x2="1" y2="0"><stop offset="0" stop-color="#9a9a9a"/><stop offset="0.5" stop-color="#e6e6e6"/><stop offset="1" stop-color="#8a8a8a"/></linearGradient>
<linearGradient id="flb" x1="0" y1="0" x2="1" y2="1"><stop offset="0" stop-color="#e4f0f8"/><stop offset="1" stop-color="#8ebedf"/></linearGradient>
<linearGradient id="flf" x1="0" y1="0" x2="1" y2="1"><stop offset="0" stop-color="#c8e4f6"/><stop offset="1" stop-color="#84b8dc"/></linearGradient>
<linearGradient id="flp" x1="0" y1="0" x2="0" y2="1"><stop offset="0" stop-color="#ffffff"/><stop offset="1" stop-color="#d0d4d8"/></linearGradient>
<linearGradient id="fpb" x1="0" y1="0" x2="1" y2="1"><stop offset="0" stop-color="#4a78d8"/><stop offset="0.6" stop-color="#8cb8ec"/><stop offset="1" stop-color="#c4e4f8"/></linearGradient>
<linearGradient id="fps" x1="0" y1="0" x2="1" y2="0"><stop offset="0" stop-color="#b4b4b4"/><stop offset="1" stop-color="#e4e4e4"/></linearGradient>
<radialGradient id="gearg" cx="0.4" cy="0.3" r="0.8"><stop offset="0" stop-color="#e8e8e8"/><stop offset="0.6" stop-color="#c0c0c0"/><stop offset="1" stop-color="#8a8a8a"/></radialGradient>
<linearGradient id="stk" x1="0" y1="0" x2="1" y2="1"><stop offset="0" stop-color="#dcdcdc"/><stop offset="1" stop-color="#d0d0d0"/></linearGradient>
</defs><path d="M7.2 16.4 L13.8 12.6 L15.6 13.2 L27.6 7.1 Q31 6 33.5 8.4 L34.8 13.5 L12 27 L8 37.5 Z" fill="url(#flb)" stroke="#262a2e" stroke-width="1.3" stroke-linejoin="round"/><path d="M10.8 29.5 L12.6 21.4 L30.2 10.4 L33.6 9.4 L33.4 17.2 L13 28 Z" fill="url(#flp)" stroke="#50565c" stroke-width="0.8" stroke-linejoin="round"/><path d="M7.9 37.6 L9.8 38.6 L31.7 26.6 L37.8 16.4 L36.3 14.2 L13.2 26.6 Z" fill="url(#flf)" stroke="#262a2e" stroke-width="1.3" stroke-linejoin="round"/><path d="M49.8 9.6 L76.4 9.6 L76.4 33.4 L73.4 36.4 L49.8 36.4 Z" fill="url(#fpb)" stroke="#2e2e2e" stroke-width="1.2" stroke-linejoin="round"/><rect x="54" y="10.3" width="18" height="12.2" fill="#e8ecf0"/><rect x="54" y="10.3" width="18" height="1" fill="#3030c8"/><rect x="54" y="12.2" width="18" height="1.6" fill="#bcbcbc"/><rect x="54" y="15" width="18" height="1.4" fill="#a8dce4"/><rect x="54" y="17.6" width="18" height="1.6" fill="#bcbcbc"/><rect x="54" y="25" width="18" height="9" fill="url(#fps)"/><rect x="56.2" y="26.2" width="4" height="7.6" rx="1.6" fill="#6a6a6a"/><path fill-rule="evenodd" fill="#6e6e6e" d="M101.8 10.4 L120.2 10.4 Q122 10.4 122.6 12.2 L125 19 Q127 19.6 127 22 L127 30.6 L95 30.6 L95 22 Q95 19.6 97 19 L99.4 12.2 Q100 10.4 101.8 10.4 Z M103 12.8 L119 12.8 L121.2 19.2 L100.8 19.2 Z"/><circle cx="100.2" cy="23.6" r="2.3" fill="#f4f2ee"/><circle cx="121.8" cy="23.6" r="2.3" fill="#f4f2ee"/><rect x="97.8" y="29" width="4.9" height="6.8" rx="1.6" fill="#6e6e6e"/><rect x="119.3" y="29" width="4.9" height="6.8" rx="1.6" fill="#6e6e6e"/><path d="M137.3 21.2 L137.3 25.4 L147.9 34.0 L166.7 24.099999999999998 L166.7 19.9 L147.9 29.8 Z" fill="#a8a8a8" stroke="#5a5a5a" stroke-width="0.8" stroke-linejoin="round"/><path d="M137.9 22.0 L137.9 24.799999999999997 L147.9 33.6 L147.9 30.400000000000002 Z" fill="#d4d4d4"/><path d="M137.3 21.2 L158.4 11.9 L166.7 19.9 L147.9 29.8 Z" fill="url(#chipg)" stroke="#6a6a6a" stroke-width="0.9" stroke-linejoin="round"/><path d="M149.22 29.71 L149.22 35.91" stroke="#3e3e3e" stroke-width="1.1"/><path d="M150.32 29.31 L150.32 35.11" stroke="#f2f2f2" stroke-width="0.9"/><path d="M151.85 28.32 L151.85 34.52" stroke="#3e3e3e" stroke-width="1.1"/><path d="M152.95 27.92 L152.95 33.72" stroke="#f2f2f2" stroke-width="0.9"/><path d="M154.48 26.94 L154.48 33.13" stroke="#3e3e3e" stroke-width="1.1"/><path d="M155.58 26.54 L155.58 32.34" stroke="#f2f2f2" stroke-width="0.9"/><path d="M157.11 25.55 L157.11 31.75" stroke="#3e3e3e" stroke-width="1.1"/><path d="M158.21 25.15 L158.21 30.95" stroke="#f2f2f2" stroke-width="0.9"/><path d="M159.74 24.16 L159.74 30.36" stroke="#3e3e3e" stroke-width="1.1"/><path d="M160.84 23.76 L160.84 29.56" stroke="#f2f2f2" stroke-width="0.9"/><path d="M162.38 22.78 L162.38 28.98" stroke="#3e3e3e" stroke-width="1.1"/><path d="M163.48 22.38 L163.48 28.18" stroke="#f2f2f2" stroke-width="0.9"/><path d="M165.01 21.39 L165.01 27.59" stroke="#3e3e3e" stroke-width="1.1"/><path d="M166.11 20.99 L166.11 26.79" stroke="#f2f2f2" stroke-width="0.9"/><path d="M138.03 23.69 Q139.63 27.29 141.63 25.09 Z" fill="#f8f8f8" stroke="#6a6a6a" stroke-width="0.7"/><path d="M142.27 27.13 Q143.87 30.73 145.87 28.53 Z" fill="#f8f8f8" stroke="#6a6a6a" stroke-width="0.7"/><path d="M147.9 7 L154.8 13.9 L151.8 13.9 L151.8 17.8 Q152.5 19.8 157.8 20.2 L153 22.4 Q146 22.6 144.2 20 L144.2 13.9 L141.3 13.9 Z" fill="url(#arrg)" stroke="#5e5e5e" stroke-width="0.9" stroke-linejoin="round"/><path d="M178.3 21.2 L178.3 25.4 L188.9 34.0 L207.7 24.099999999999998 L207.7 19.9 L188.9 29.8 Z" fill="#a8a8a8" stroke="#5a5a5a" stroke-width="0.8" stroke-linejoin="round"/><path d="M178.9 22.0 L178.9 24.799999999999997 L188.9 33.6 L188.9 30.400000000000002 Z" fill="#d4d4d4"/><path d="M178.3 21.2 L199.4 11.9 L207.7 19.9 L188.9 29.8 Z" fill="url(#chipg)" stroke="#6a6a6a" stroke-width="0.9" stroke-linejoin="round"/><path d="M190.22 29.71 L190.22 35.91" stroke="#3e3e3e" stroke-width="1.1"/><path d="M191.32 29.31 L191.32 35.11" stroke="#f2f2f2" stroke-width="0.9"/><path d="M192.85 28.32 L192.85 34.52" stroke="#3e3e3e" stroke-width="1.1"/><path d="M193.95 27.92 L193.95 33.72" stroke="#f2f2f2" stroke-width="0.9"/><path d="M195.48 26.94 L195.48 33.13" stroke="#3e3e3e" stroke-width="1.1"/><path d="M196.58 26.54 L196.58 32.34" stroke="#f2f2f2" stroke-width="0.9"/><path d="M198.11 25.55 L198.11 31.75" stroke="#3e3e3e" stroke-width="1.1"/><path d="M199.21 25.15 L199.21 30.95" stroke="#f2f2f2" stroke-width="0.9"/><path d="M200.74 24.16 L200.74 30.36" stroke="#3e3e3e" stroke-width="1.1"/><path d="M201.84 23.76 L201.84 29.56" stroke="#f2f2f2" stroke-width="0.9"/><path d="M203.38 22.78 L203.38 28.98" stroke="#3e3e3e" stroke-width="1.1"/><path d="M204.48 22.38 L204.48 28.18" stroke="#f2f2f2" stroke-width="0.9"/><path d="M206.01 21.39 L206.01 27.59" stroke="#3e3e3e" stroke-width="1.1"/><path d="M207.11 20.99 L207.11 26.79" stroke="#f2f2f2" stroke-width="0.9"/><path d="M179.03 23.69 Q180.63 27.29 182.63 25.09 Z" fill="#f8f8f8" stroke="#6a6a6a" stroke-width="0.7"/><path d="M183.27 27.13 Q184.87 30.73 186.87 28.53 Z" fill="#f8f8f8" stroke="#6a6a6a" stroke-width="0.7"/><path d="M182.8 9.3 Q184 7 193 7 Q197.3 7.3 197.3 11 L197.3 17.3 L199.6 17.3 L192.5 23 L185.5 17.3 L188 17.3 L188 12.5 Q188 10.3 185.5 10 Z" fill="url(#arrg)" stroke="#5e5e5e" stroke-width="0.9" stroke-linejoin="round"/><path d="M219.3 21.2 L219.3 25.4 L229.9 34.0 L248.7 24.099999999999998 L248.7 19.9 L229.9 29.8 Z" fill="#a8a8a8" stroke="#5a5a5a" stroke-width="0.8" stroke-linejoin="round"/><path d="M219.9 22.0 L219.9 24.799999999999997 L229.9 33.6 L229.9 30.400000000000002 Z" fill="#d4d4d4"/><path d="M219.3 21.2 L240.4 11.9 L248.7 19.9 L229.9 29.8 Z" fill="url(#chipg)" stroke="#6a6a6a" stroke-width="0.9" stroke-linejoin="round"/><path d="M231.22 29.71 L231.22 35.91" stroke="#3e3e3e" stroke-width="1.1"/><path d="M232.32 29.31 L232.32 35.11" stroke="#f2f2f2" stroke-width="0.9"/><path d="M233.85 28.32 L233.85 34.52" stroke="#3e3e3e" stroke-width="1.1"/><path d="M234.95 27.92 L234.95 33.72" stroke="#f2f2f2" stroke-width="0.9"/><path d="M236.48 26.94 L236.48 33.13" stroke="#3e3e3e" stroke-width="1.1"/><path d="M237.58 26.54 L237.58 32.34" stroke="#f2f2f2" stroke-width="0.9"/><path d="M239.11 25.55 L239.11 31.75" stroke="#3e3e3e" stroke-width="1.1"/><path d="M240.21 25.15 L240.21 30.95" stroke="#f2f2f2" stroke-width="0.9"/><path d="M241.74 24.16 L241.74 30.36" stroke="#3e3e3e" stroke-width="1.1"/><path d="M242.84 23.76 L242.84 29.56" stroke="#f2f2f2" stroke-width="0.9"/><path d="M244.38 22.78 L244.38 28.98" stroke="#3e3e3e" stroke-width="1.1"/><path d="M245.48 22.38 L245.48 28.18" stroke="#f2f2f2" stroke-width="0.9"/><path d="M247.01 21.39 L247.01 27.59" stroke="#3e3e3e" stroke-width="1.1"/><path d="M248.11 20.99 L248.11 26.79" stroke="#f2f2f2" stroke-width="0.9"/><path d="M220.03 23.69 Q221.63 27.29 223.63 25.09 Z" fill="#f8f8f8" stroke="#6a6a6a" stroke-width="0.7"/><path d="M224.27 27.13 Q225.87 30.73 227.87 28.53 Z" fill="#f8f8f8" stroke="#6a6a6a" stroke-width="0.7"/><path d="M223.8 9.3 Q225 7 234 7 Q238.3 7.3 238.3 11 L238.3 17.3 L240.6 17.3 L233.5 23 L226.5 17.3 L229 17.3 L229 12.5 Q229 10.3 226.5 10 Z" fill="url(#arrg)" stroke="#5e5e5e" stroke-width="0.9" stroke-linejoin="round"/><path d="M260.4 17.1 L260.4 29.900000000000002 L270.4 38.0 L289.9 26.1 L289.9 14.8 L270.4 25.2 Z" fill="#c8c8c8" stroke="#5e5e5e" stroke-width="0.9" stroke-linejoin="round"/><path d="M260.4 17.1 L280.2 7.0 L289.9 14.8 L270.4 25.2 Z" fill="url(#stk)" stroke="#6a6a6a" stroke-width="0.9" stroke-linejoin="round"/><circle cx="262.78" cy="15.59" r="0.8" fill="#7a7a7a"/><circle cx="266.54" cy="13.67" r="0.8" fill="#7a7a7a"/><circle cx="270.30" cy="11.75" r="0.8" fill="#7a7a7a"/><circle cx="274.06" cy="9.83" r="0.8" fill="#7a7a7a"/><circle cx="277.82" cy="7.91" r="0.8" fill="#7a7a7a"/><path d="M260.4 23.5 L270.4 31.6 L289.9 20.4" fill="none" stroke="#6a6a6a" stroke-width="0.8"/><path d="M271.96 25.17 L271.96 30.17" stroke="#3a3a3a" stroke-width="1.1"/><path d="M273.06 24.77 L273.06 29.57" stroke="#f4f4f4" stroke-width="0.9"/><path d="M274.59 23.76 L274.59 28.76" stroke="#3a3a3a" stroke-width="1.1"/><path d="M275.69 23.36 L275.69 28.16" stroke="#f4f4f4" stroke-width="0.9"/><path d="M277.22 22.36 L277.22 27.36" stroke="#3a3a3a" stroke-width="1.1"/><path d="M278.32 21.96 L278.32 26.76" stroke="#f4f4f4" stroke-width="0.9"/><path d="M279.86 20.96 L279.86 25.96" stroke="#3a3a3a" stroke-width="1.1"/><path d="M280.96 20.56 L280.96 25.36" stroke="#f4f4f4" stroke-width="0.9"/><path d="M282.49 19.55 L282.49 24.55" stroke="#3a3a3a" stroke-width="1.1"/><path d="M283.59 19.15 L283.59 23.95" stroke="#f4f4f4" stroke-width="0.9"/><path d="M285.12 18.15 L285.12 23.15" stroke="#3a3a3a" stroke-width="1.1"/><path d="M286.22 17.75 L286.22 22.55" stroke="#f4f4f4" stroke-width="0.9"/><path d="M287.75 16.74 L287.75 21.74" stroke="#3a3a3a" stroke-width="1.1"/><path d="M288.86 16.34 L288.86 21.14" stroke="#f4f4f4" stroke-width="0.9"/><path d="M261.30 19.93 Q262.90 23.73 264.90 21.32 Z" fill="#fafafa" stroke="#6a6a6a" stroke-width="0.7"/><path d="M265.30 23.17 Q266.90 26.97 268.90 24.57 Z" fill="#fafafa" stroke="#6a6a6a" stroke-width="0.7"/><path d="M271.96 31.57 L271.96 36.57" stroke="#3a3a3a" stroke-width="1.1"/><path d="M273.06 31.17 L273.06 35.97" stroke="#f4f4f4" stroke-width="0.9"/><path d="M274.59 30.16 L274.59 35.16" stroke="#3a3a3a" stroke-width="1.1"/><path d="M275.69 29.76 L275.69 34.56" stroke="#f4f4f4" stroke-width="0.9"/><path d="M277.22 28.76 L277.22 33.76" stroke="#3a3a3a" stroke-width="1.1"/><path d="M278.32 28.36 L278.32 33.16" stroke="#f4f4f4" stroke-width="0.9"/><path d="M279.86 27.36 L279.86 32.36" stroke="#3a3a3a" stroke-width="1.1"/><path d="M280.96 26.96 L280.96 31.76" stroke="#f4f4f4" stroke-width="0.9"/><path d="M282.49 25.95 L282.49 30.95" stroke="#3a3a3a" stroke-width="1.1"/><path d="M283.59 25.55 L283.59 30.35" stroke="#f4f4f4" stroke-width="0.9"/><path d="M285.12 24.55 L285.12 29.55" stroke="#3a3a3a" stroke-width="1.1"/><path d="M286.22 24.15 L286.22 28.95" stroke="#f4f4f4" stroke-width="0.9"/><path d="M287.75 23.14 L287.75 28.14" stroke="#3a3a3a" stroke-width="1.1"/><path d="M288.86 22.74 L288.86 27.54" stroke="#f4f4f4" stroke-width="0.9"/><path d="M261.30 26.32 Q262.90 30.12 264.90 27.72 Z" fill="#fafafa" stroke="#6a6a6a" stroke-width="0.7"/><path d="M265.30 29.57 Q266.90 33.37 268.90 30.96 Z" fill="#fafafa" stroke="#6a6a6a" stroke-width="0.7"/><ellipse cx="316" cy="37.8" rx="10" ry="1.8" fill="rgba(0,0,0,0.07)"/><path d="M313.70 10.88 L313.84 8.03 L317.76 8.03 L317.90 10.88 L319.99 11.44 L321.54 9.04 L324.93 11.00 L323.63 13.54 L325.16 15.07 L327.70 13.77 L329.66 17.16 L327.26 18.71 L327.82 20.80 L330.67 20.94 L330.67 24.86 L327.82 25.00 L327.26 27.09 L329.66 28.64 L327.70 32.03 L325.16 30.73 L323.63 32.26 L324.93 34.80 L321.54 36.76 L319.99 34.36 L317.90 34.92 L317.76 37.77 L313.84 37.77 L313.70 34.92 L311.61 34.36 L310.06 36.76 L306.67 34.80 L307.97 32.26 L306.44 30.73 L303.90 32.03 L301.94 28.64 L304.34 27.09 L303.78 25.00 L300.93 24.86 L300.93 20.94 L303.78 20.80 L304.34 18.71 L301.94 17.16 L303.90 13.77 L306.44 15.07 L307.97 13.54 L306.67 11.00 L310.06 9.04 L311.61 11.44 Z" fill="url(#gearg)" stroke="#6e6e6e" stroke-width="1" stroke-linejoin="round"/><circle cx="315.8" cy="22.9" r="8.4" fill="none" stroke="#d8d8d8" stroke-width="1.2"/><circle cx="315.8" cy="22.9" r="7.2" fill="none" stroke="#a4a4a4" stroke-width="1"/><circle cx="315.8" cy="22.9" r="5.0" fill="none" stroke="#7e7e7e" stroke-width="2.2"/><circle cx="315.8" cy="22.9" r="3.5" fill="#f6f4f0" stroke="#6a6a6a" stroke-width="0.7"/></svg></body></html>
